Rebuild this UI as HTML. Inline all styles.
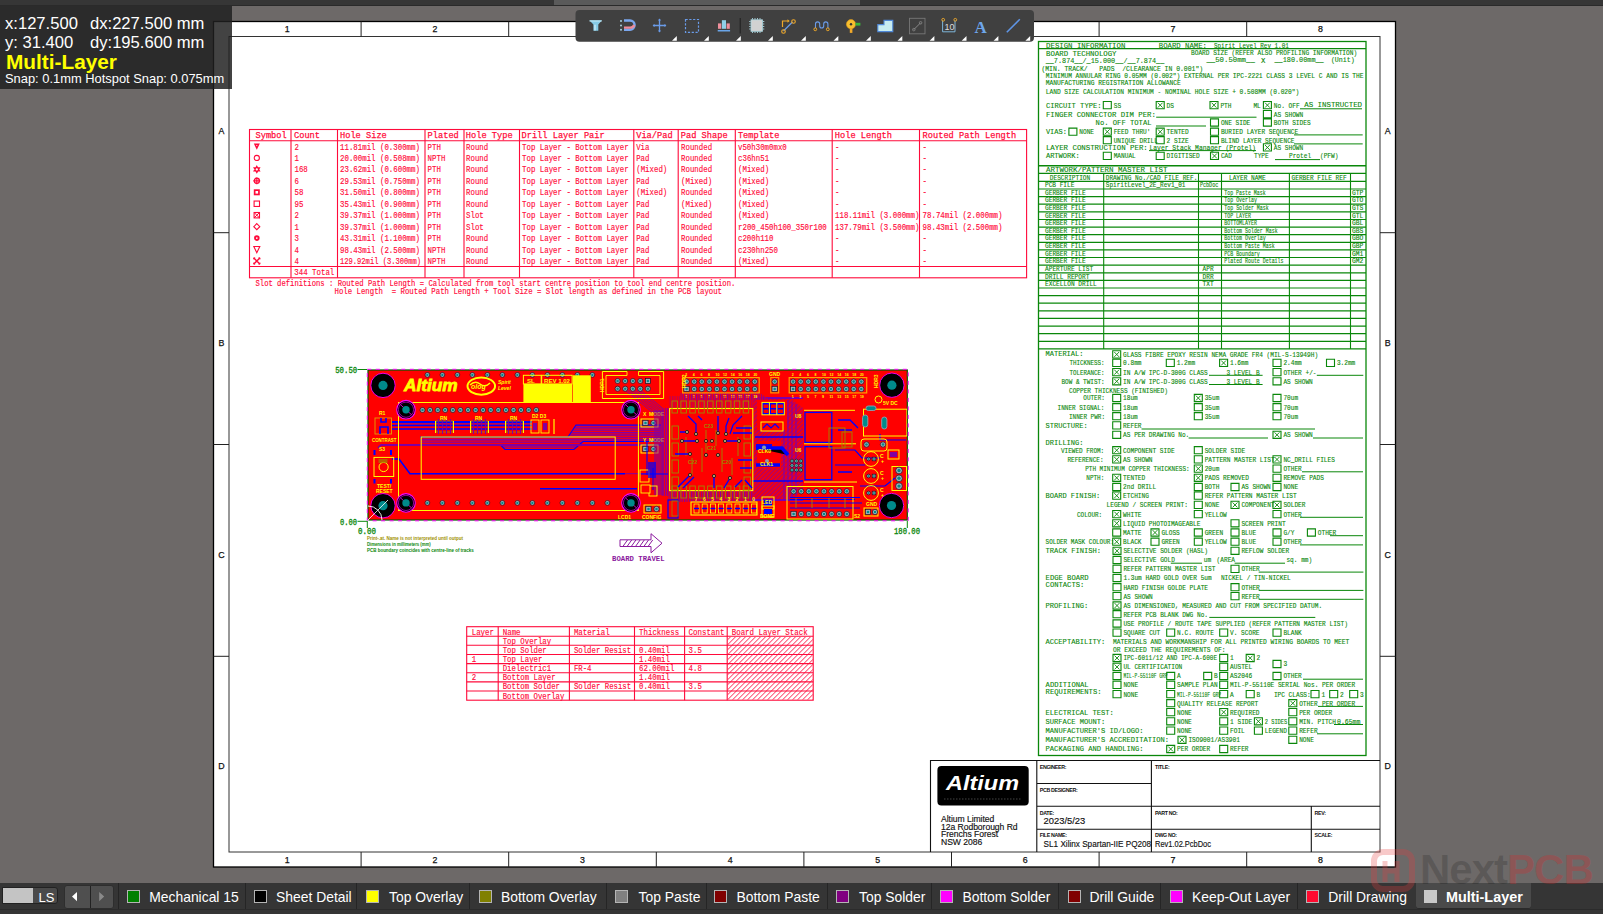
<!DOCTYPE html><html><head><meta charset="utf-8"><style>
*{margin:0;padding:0;box-sizing:border-box}
html,body{width:1603px;height:914px;overflow:hidden;background:#6d6968;font-family:"Liberation Sans",sans-serif}
#topbar{position:absolute;left:0;top:0;width:1603px;height:6px;background:#363636;border-bottom:1px solid #2a2a2a}
#thumb{position:absolute;left:554px;top:0;width:306px;height:5px;background:#5a5a5a}
svg{position:absolute;left:0;top:0}
.rh{font:9.5px "Liberation Mono",monospace;fill:#ff0a3a;stroke:#ff0a3a;stroke-width:0.25}
.rb{font:8.5px "Liberation Mono",monospace;fill:#ff0a3a;stroke:#ff0a3a;stroke-width:0.15}
.rs{font:8.2px "Liberation Mono",monospace;fill:#ff0a3a;stroke:#ff0a3a;stroke-width:0.15}
.rl{font:8.2px "Liberation Mono",monospace;fill:#ff0a3a;stroke:#ff0a3a;stroke-width:0.15}
.gt{font:8px "Liberation Mono",monospace;fill:#0a870a;stroke:#0a870a;stroke-width:0.12}
.go{font:6.9px "Liberation Mono",monospace;fill:#0a870a;stroke:#0a870a;stroke-width:0.12}
.tb1{font:8.6px "Liberation Sans",sans-serif;fill:#111;stroke:#111;stroke-width:0.15;letter-spacing:-0.05px}
.tbl{font:bold 5.3px "Liberation Sans",sans-serif;fill:#111;letter-spacing:-0.35px}
.tb2{font:8.8px "Liberation Sans",sans-serif;fill:#111;stroke:#111;stroke-width:0.15}
.py{font:bold 5px "Liberation Sans",sans-serif;fill:#ffff00}
.pys{font:bold 3.5px "Liberation Sans",sans-serif;fill:#ffff00}
.pyo{font:bold 5px "Liberation Sans",sans-serif;fill:#9a8a00}
.dim{font:8.2px "Liberation Mono",monospace;fill:#0a870a;stroke:#0a870a;stroke-width:0.3}
.tiny{font:bold 4.5px "Liberation Sans",sans-serif;fill:#0a870a}
.bt2{font:bold 7px "Liberation Mono",monospace;fill:#8b1a9e}
.zl{font:8.8px "Liberation Sans",sans-serif;fill:#111;stroke:#111;stroke-width:0.25;text-anchor:middle}
#hud{position:absolute;left:0;top:6px;width:232px;height:83px;background:rgba(31,31,31,0.84);color:#fff}
.ht{position:absolute;font:16.6px "Liberation Sans",sans-serif;color:#fff;white-space:nowrap;line-height:20px}
.hm{position:absolute;font:bold 20.8px "Liberation Sans",sans-serif;color:#ffff00;white-space:nowrap;line-height:22px}
.hs{position:absolute;font:12.9px "Liberation Sans",sans-serif;color:#fff;white-space:nowrap;line-height:16px}
.bt{position:absolute;font:13.9px "Liberation Sans",sans-serif;color:#fff;white-space:nowrap;line-height:17px}
text{white-space:pre}
#bottom{position:absolute;left:0;top:883px;width:1603px;height:31px;background:#353535}
</style></head><body>
<div id="topbar"><div id="thumb"></div></div>
<svg width="1603" height="914" viewBox="0 0 1603 914"><rect x="213.5" y="21.5" width="1182" height="845.5" fill="#fff" stroke="#000" stroke-width="1.3"/>
<rect x="229" y="36.5" width="1151" height="815.5" fill="none" stroke="#333" stroke-width="1"/>
<line x1="361.1" y1="21.5" x2="361.1" y2="36.5" stroke="#222" stroke-width="1"/>
<line x1="361.1" y1="852" x2="361.1" y2="867" stroke="#222" stroke-width="1"/>
<line x1="508.7" y1="21.5" x2="508.7" y2="36.5" stroke="#222" stroke-width="1"/>
<line x1="508.7" y1="852" x2="508.7" y2="867" stroke="#222" stroke-width="1"/>
<line x1="656.3" y1="21.5" x2="656.3" y2="36.5" stroke="#222" stroke-width="1"/>
<line x1="656.3" y1="852" x2="656.3" y2="867" stroke="#222" stroke-width="1"/>
<line x1="803.9" y1="21.5" x2="803.9" y2="36.5" stroke="#222" stroke-width="1"/>
<line x1="803.9" y1="852" x2="803.9" y2="867" stroke="#222" stroke-width="1"/>
<line x1="951.5" y1="21.5" x2="951.5" y2="36.5" stroke="#222" stroke-width="1"/>
<line x1="951.5" y1="852" x2="951.5" y2="867" stroke="#222" stroke-width="1"/>
<line x1="1099.1" y1="21.5" x2="1099.1" y2="36.5" stroke="#222" stroke-width="1"/>
<line x1="1099.1" y1="852" x2="1099.1" y2="867" stroke="#222" stroke-width="1"/>
<line x1="1246.7" y1="21.5" x2="1246.7" y2="36.5" stroke="#222" stroke-width="1"/>
<line x1="1246.7" y1="852" x2="1246.7" y2="867" stroke="#222" stroke-width="1"/>
<line x1="213.5" y1="232.7" x2="229" y2="232.7" stroke="#222" stroke-width="1"/>
<line x1="1380" y1="232.7" x2="1395.5" y2="232.7" stroke="#222" stroke-width="1"/>
<line x1="213.5" y1="444.5" x2="229" y2="444.5" stroke="#222" stroke-width="1"/>
<line x1="1380" y1="444.5" x2="1395.5" y2="444.5" stroke="#222" stroke-width="1"/>
<line x1="213.5" y1="656.3" x2="229" y2="656.3" stroke="#222" stroke-width="1"/>
<line x1="1380" y1="656.3" x2="1395.5" y2="656.3" stroke="#222" stroke-width="1"/>
<text x="287.3" y="32.3" class="zl">1</text>
<text x="287.3" y="862.7" class="zl">1</text>
<text x="434.9" y="32.3" class="zl">2</text>
<text x="434.9" y="862.7" class="zl">2</text>
<text x="582.5" y="32.3" class="zl">3</text>
<text x="582.5" y="862.7" class="zl">3</text>
<text x="730.1" y="32.3" class="zl">4</text>
<text x="730.1" y="862.7" class="zl">4</text>
<text x="877.7" y="32.3" class="zl">5</text>
<text x="877.7" y="862.7" class="zl">5</text>
<text x="1025.3" y="32.3" class="zl">6</text>
<text x="1025.3" y="862.7" class="zl">6</text>
<text x="1172.9" y="32.3" class="zl">7</text>
<text x="1172.9" y="862.7" class="zl">7</text>
<text x="1320.5" y="32.3" class="zl">8</text>
<text x="1320.5" y="862.7" class="zl">8</text>
<text x="221.4" y="134.0" class="zl">A</text>
<text x="1387.7" y="134.0" class="zl">A</text>
<text x="221.4" y="345.8" class="zl">B</text>
<text x="1387.7" y="345.8" class="zl">B</text>
<text x="221.4" y="557.6" class="zl">C</text>
<text x="1387.7" y="557.6" class="zl">C</text>
<text x="221.4" y="769.4" class="zl">D</text>
<text x="1387.7" y="769.4" class="zl">D</text>
<g stroke="#ff0a3a" stroke-width="1.1" fill="none">
<rect x="249.5" y="129.5" width="777.1" height="148.3"/>
<line x1="291" y1="129.5" x2="291" y2="277.8"/>
<line x1="337.5" y1="129.5" x2="337.5" y2="277.8"/>
<line x1="425" y1="129.5" x2="425" y2="277.8"/>
<line x1="464" y1="129.5" x2="464" y2="277.8"/>
<line x1="519.5" y1="129.5" x2="519.5" y2="277.8"/>
<line x1="633.8" y1="129.5" x2="633.8" y2="277.8"/>
<line x1="678.2" y1="129.5" x2="678.2" y2="277.8"/>
<line x1="735.3" y1="129.5" x2="735.3" y2="277.8"/>
<line x1="832.2" y1="129.5" x2="832.2" y2="277.8"/>
<line x1="919.5" y1="129.5" x2="919.5" y2="277.8"/>
<line x1="249.5" y1="140.7" x2="1026.6" y2="140.7"/>
<line x1="249.5" y1="266.5" x2="1026.6" y2="266.5"/>
</g>
<text x="255.5" y="137.8" class="rh" textLength="31.2" lengthAdjust="spacingAndGlyphs">Symbol</text>
<text x="294.0" y="137.8" class="rh" textLength="26.0" lengthAdjust="spacingAndGlyphs">Count</text>
<text x="340.0" y="137.8" class="rh" textLength="46.8" lengthAdjust="spacingAndGlyphs">Hole Size</text>
<text x="427.6" y="137.8" class="rh" textLength="31.2" lengthAdjust="spacingAndGlyphs">Plated</text>
<text x="465.8" y="137.8" class="rh" textLength="46.8" lengthAdjust="spacingAndGlyphs">Hole Type</text>
<text x="521.5" y="137.8" class="rh" textLength="83.2" lengthAdjust="spacingAndGlyphs">Drill Layer Pair</text>
<text x="636.2" y="137.8" class="rh" textLength="36.4" lengthAdjust="spacingAndGlyphs">Via/Pad</text>
<text x="680.8" y="137.8" class="rh" textLength="46.8" lengthAdjust="spacingAndGlyphs">Pad Shape</text>
<text x="737.9" y="137.8" class="rh" textLength="41.6" lengthAdjust="spacingAndGlyphs">Template</text>
<text x="834.8" y="137.8" class="rh" textLength="57.2" lengthAdjust="spacingAndGlyphs">Hole Length</text>
<text x="922.6" y="137.8" class="rh" textLength="93.6" lengthAdjust="spacingAndGlyphs">Routed Path Length</text>
<text x="294.5" y="149.5" class="rb" textLength="4.4" lengthAdjust="spacingAndGlyphs">2</text>
<text x="340.0" y="149.5" class="rb" textLength="79.9" lengthAdjust="spacingAndGlyphs">11.81mil (0.300mm)</text>
<text x="427.6" y="149.5" class="rb" textLength="13.3" lengthAdjust="spacingAndGlyphs">PTH</text>
<text x="466.0" y="149.5" class="rb" textLength="22.2" lengthAdjust="spacingAndGlyphs">Round</text>
<text x="522.0" y="149.5" class="rb" textLength="106.6" lengthAdjust="spacingAndGlyphs">Top Layer - Bottom Layer</text>
<text x="636.2" y="149.5" class="rb" textLength="13.3" lengthAdjust="spacingAndGlyphs">Via</text>
<text x="681.0" y="149.5" class="rb" textLength="31.1" lengthAdjust="spacingAndGlyphs">Rounded</text>
<text x="738.0" y="149.5" class="rb" textLength="48.8" lengthAdjust="spacingAndGlyphs">v50h30m0mx0</text>
<text x="835.0" y="149.5" class="rb" textLength="4.4" lengthAdjust="spacingAndGlyphs">-</text>
<text x="922.6" y="149.5" class="rb" textLength="4.4" lengthAdjust="spacingAndGlyphs">-</text>
<text x="294.5" y="160.9" class="rb" textLength="4.4" lengthAdjust="spacingAndGlyphs">1</text>
<text x="340.0" y="160.9" class="rb" textLength="79.9" lengthAdjust="spacingAndGlyphs">20.00mil (0.508mm)</text>
<text x="427.6" y="160.9" class="rb" textLength="17.8" lengthAdjust="spacingAndGlyphs">NPTH</text>
<text x="466.0" y="160.9" class="rb" textLength="22.2" lengthAdjust="spacingAndGlyphs">Round</text>
<text x="522.0" y="160.9" class="rb" textLength="106.6" lengthAdjust="spacingAndGlyphs">Top Layer - Bottom Layer</text>
<text x="636.2" y="160.9" class="rb" textLength="13.3" lengthAdjust="spacingAndGlyphs">Pad</text>
<text x="681.0" y="160.9" class="rb" textLength="31.1" lengthAdjust="spacingAndGlyphs">Rounded</text>
<text x="738.0" y="160.9" class="rb" textLength="31.1" lengthAdjust="spacingAndGlyphs">c36hn51</text>
<text x="835.0" y="160.9" class="rb" textLength="4.4" lengthAdjust="spacingAndGlyphs">-</text>
<text x="922.6" y="160.9" class="rb" textLength="4.4" lengthAdjust="spacingAndGlyphs">-</text>
<text x="294.5" y="172.4" class="rb" textLength="13.3" lengthAdjust="spacingAndGlyphs">168</text>
<text x="340.0" y="172.4" class="rb" textLength="79.9" lengthAdjust="spacingAndGlyphs">23.62mil (0.600mm)</text>
<text x="427.6" y="172.4" class="rb" textLength="13.3" lengthAdjust="spacingAndGlyphs">PTH</text>
<text x="466.0" y="172.4" class="rb" textLength="22.2" lengthAdjust="spacingAndGlyphs">Round</text>
<text x="522.0" y="172.4" class="rb" textLength="106.6" lengthAdjust="spacingAndGlyphs">Top Layer - Bottom Layer</text>
<text x="636.2" y="172.4" class="rb" textLength="31.1" lengthAdjust="spacingAndGlyphs">(Mixed)</text>
<text x="681.0" y="172.4" class="rb" textLength="31.1" lengthAdjust="spacingAndGlyphs">Rounded</text>
<text x="738.0" y="172.4" class="rb" textLength="31.1" lengthAdjust="spacingAndGlyphs">(Mixed)</text>
<text x="835.0" y="172.4" class="rb" textLength="4.4" lengthAdjust="spacingAndGlyphs">-</text>
<text x="922.6" y="172.4" class="rb" textLength="4.4" lengthAdjust="spacingAndGlyphs">-</text>
<text x="294.5" y="183.8" class="rb" textLength="4.4" lengthAdjust="spacingAndGlyphs">6</text>
<text x="340.0" y="183.8" class="rb" textLength="79.9" lengthAdjust="spacingAndGlyphs">29.53mil (0.750mm)</text>
<text x="427.6" y="183.8" class="rb" textLength="13.3" lengthAdjust="spacingAndGlyphs">PTH</text>
<text x="466.0" y="183.8" class="rb" textLength="22.2" lengthAdjust="spacingAndGlyphs">Round</text>
<text x="522.0" y="183.8" class="rb" textLength="106.6" lengthAdjust="spacingAndGlyphs">Top Layer - Bottom Layer</text>
<text x="636.2" y="183.8" class="rb" textLength="13.3" lengthAdjust="spacingAndGlyphs">Pad</text>
<text x="681.0" y="183.8" class="rb" textLength="31.1" lengthAdjust="spacingAndGlyphs">(Mixed)</text>
<text x="738.0" y="183.8" class="rb" textLength="31.1" lengthAdjust="spacingAndGlyphs">(Mixed)</text>
<text x="835.0" y="183.8" class="rb" textLength="4.4" lengthAdjust="spacingAndGlyphs">-</text>
<text x="922.6" y="183.8" class="rb" textLength="4.4" lengthAdjust="spacingAndGlyphs">-</text>
<text x="294.5" y="195.3" class="rb" textLength="8.9" lengthAdjust="spacingAndGlyphs">58</text>
<text x="340.0" y="195.3" class="rb" textLength="79.9" lengthAdjust="spacingAndGlyphs">31.50mil (0.800mm)</text>
<text x="427.6" y="195.3" class="rb" textLength="13.3" lengthAdjust="spacingAndGlyphs">PTH</text>
<text x="466.0" y="195.3" class="rb" textLength="22.2" lengthAdjust="spacingAndGlyphs">Round</text>
<text x="522.0" y="195.3" class="rb" textLength="106.6" lengthAdjust="spacingAndGlyphs">Top Layer - Bottom Layer</text>
<text x="636.2" y="195.3" class="rb" textLength="31.1" lengthAdjust="spacingAndGlyphs">(Mixed)</text>
<text x="681.0" y="195.3" class="rb" textLength="31.1" lengthAdjust="spacingAndGlyphs">Rounded</text>
<text x="738.0" y="195.3" class="rb" textLength="31.1" lengthAdjust="spacingAndGlyphs">(Mixed)</text>
<text x="835.0" y="195.3" class="rb" textLength="4.4" lengthAdjust="spacingAndGlyphs">-</text>
<text x="922.6" y="195.3" class="rb" textLength="4.4" lengthAdjust="spacingAndGlyphs">-</text>
<text x="294.5" y="206.8" class="rb" textLength="8.9" lengthAdjust="spacingAndGlyphs">95</text>
<text x="340.0" y="206.8" class="rb" textLength="79.9" lengthAdjust="spacingAndGlyphs">35.43mil (0.900mm)</text>
<text x="427.6" y="206.8" class="rb" textLength="13.3" lengthAdjust="spacingAndGlyphs">PTH</text>
<text x="466.0" y="206.8" class="rb" textLength="22.2" lengthAdjust="spacingAndGlyphs">Round</text>
<text x="522.0" y="206.8" class="rb" textLength="106.6" lengthAdjust="spacingAndGlyphs">Top Layer - Bottom Layer</text>
<text x="636.2" y="206.8" class="rb" textLength="13.3" lengthAdjust="spacingAndGlyphs">Pad</text>
<text x="681.0" y="206.8" class="rb" textLength="31.1" lengthAdjust="spacingAndGlyphs">(Mixed)</text>
<text x="738.0" y="206.8" class="rb" textLength="31.1" lengthAdjust="spacingAndGlyphs">(Mixed)</text>
<text x="835.0" y="206.8" class="rb" textLength="4.4" lengthAdjust="spacingAndGlyphs">-</text>
<text x="922.6" y="206.8" class="rb" textLength="4.4" lengthAdjust="spacingAndGlyphs">-</text>
<text x="294.5" y="218.2" class="rb" textLength="4.4" lengthAdjust="spacingAndGlyphs">2</text>
<text x="340.0" y="218.2" class="rb" textLength="79.9" lengthAdjust="spacingAndGlyphs">39.37mil (1.000mm)</text>
<text x="427.6" y="218.2" class="rb" textLength="13.3" lengthAdjust="spacingAndGlyphs">PTH</text>
<text x="466.0" y="218.2" class="rb" textLength="17.8" lengthAdjust="spacingAndGlyphs">Slot</text>
<text x="522.0" y="218.2" class="rb" textLength="106.6" lengthAdjust="spacingAndGlyphs">Top Layer - Bottom Layer</text>
<text x="636.2" y="218.2" class="rb" textLength="13.3" lengthAdjust="spacingAndGlyphs">Pad</text>
<text x="681.0" y="218.2" class="rb" textLength="31.1" lengthAdjust="spacingAndGlyphs">Rounded</text>
<text x="738.0" y="218.2" class="rb" textLength="31.1" lengthAdjust="spacingAndGlyphs">(Mixed)</text>
<text x="835.0" y="218.2" class="rb" textLength="84.4" lengthAdjust="spacingAndGlyphs">118.11mil (3.000mm)</text>
<text x="922.6" y="218.2" class="rb" textLength="79.9" lengthAdjust="spacingAndGlyphs">78.74mil (2.000mm)</text>
<text x="294.5" y="229.6" class="rb" textLength="4.4" lengthAdjust="spacingAndGlyphs">1</text>
<text x="340.0" y="229.6" class="rb" textLength="79.9" lengthAdjust="spacingAndGlyphs">39.37mil (1.000mm)</text>
<text x="427.6" y="229.6" class="rb" textLength="13.3" lengthAdjust="spacingAndGlyphs">PTH</text>
<text x="466.0" y="229.6" class="rb" textLength="17.8" lengthAdjust="spacingAndGlyphs">Slot</text>
<text x="522.0" y="229.6" class="rb" textLength="106.6" lengthAdjust="spacingAndGlyphs">Top Layer - Bottom Layer</text>
<text x="636.2" y="229.6" class="rb" textLength="13.3" lengthAdjust="spacingAndGlyphs">Pad</text>
<text x="681.0" y="229.6" class="rb" textLength="31.1" lengthAdjust="spacingAndGlyphs">Rounded</text>
<text x="738.0" y="229.6" class="rb" textLength="88.8" lengthAdjust="spacingAndGlyphs">r200_450h100_350r100</text>
<text x="835.0" y="229.6" class="rb" textLength="84.4" lengthAdjust="spacingAndGlyphs">137.79mil (3.500mm)</text>
<text x="922.6" y="229.6" class="rb" textLength="79.9" lengthAdjust="spacingAndGlyphs">98.43mil (2.500mm)</text>
<text x="294.5" y="241.1" class="rb" textLength="4.4" lengthAdjust="spacingAndGlyphs">3</text>
<text x="340.0" y="241.1" class="rb" textLength="79.9" lengthAdjust="spacingAndGlyphs">43.31mil (1.100mm)</text>
<text x="427.6" y="241.1" class="rb" textLength="13.3" lengthAdjust="spacingAndGlyphs">PTH</text>
<text x="466.0" y="241.1" class="rb" textLength="22.2" lengthAdjust="spacingAndGlyphs">Round</text>
<text x="522.0" y="241.1" class="rb" textLength="106.6" lengthAdjust="spacingAndGlyphs">Top Layer - Bottom Layer</text>
<text x="636.2" y="241.1" class="rb" textLength="13.3" lengthAdjust="spacingAndGlyphs">Pad</text>
<text x="681.0" y="241.1" class="rb" textLength="31.1" lengthAdjust="spacingAndGlyphs">Rounded</text>
<text x="738.0" y="241.1" class="rb" textLength="35.5" lengthAdjust="spacingAndGlyphs">c200h110</text>
<text x="835.0" y="241.1" class="rb" textLength="4.4" lengthAdjust="spacingAndGlyphs">-</text>
<text x="922.6" y="241.1" class="rb" textLength="4.4" lengthAdjust="spacingAndGlyphs">-</text>
<text x="294.5" y="252.6" class="rb" textLength="4.4" lengthAdjust="spacingAndGlyphs">4</text>
<text x="340.0" y="252.6" class="rb" textLength="79.9" lengthAdjust="spacingAndGlyphs">98.43mil (2.500mm)</text>
<text x="427.6" y="252.6" class="rb" textLength="17.8" lengthAdjust="spacingAndGlyphs">NPTH</text>
<text x="466.0" y="252.6" class="rb" textLength="22.2" lengthAdjust="spacingAndGlyphs">Round</text>
<text x="522.0" y="252.6" class="rb" textLength="106.6" lengthAdjust="spacingAndGlyphs">Top Layer - Bottom Layer</text>
<text x="636.2" y="252.6" class="rb" textLength="13.3" lengthAdjust="spacingAndGlyphs">Pad</text>
<text x="681.0" y="252.6" class="rb" textLength="31.1" lengthAdjust="spacingAndGlyphs">Rounded</text>
<text x="738.0" y="252.6" class="rb" textLength="40.0" lengthAdjust="spacingAndGlyphs">c230hn250</text>
<text x="835.0" y="252.6" class="rb" textLength="4.4" lengthAdjust="spacingAndGlyphs">-</text>
<text x="922.6" y="252.6" class="rb" textLength="4.4" lengthAdjust="spacingAndGlyphs">-</text>
<text x="294.5" y="264.0" class="rb" textLength="4.4" lengthAdjust="spacingAndGlyphs">4</text>
<text x="340.0" y="264.0" class="rb" textLength="81.1" lengthAdjust="spacingAndGlyphs">129.92mil (3.300mm)</text>
<text x="427.6" y="264.0" class="rb" textLength="17.8" lengthAdjust="spacingAndGlyphs">NPTH</text>
<text x="466.0" y="264.0" class="rb" textLength="22.2" lengthAdjust="spacingAndGlyphs">Round</text>
<text x="522.0" y="264.0" class="rb" textLength="106.6" lengthAdjust="spacingAndGlyphs">Top Layer - Bottom Layer</text>
<text x="636.2" y="264.0" class="rb" textLength="13.3" lengthAdjust="spacingAndGlyphs">Pad</text>
<text x="681.0" y="264.0" class="rb" textLength="31.1" lengthAdjust="spacingAndGlyphs">Rounded</text>
<text x="738.0" y="264.0" class="rb" textLength="31.1" lengthAdjust="spacingAndGlyphs">(Mixed)</text>
<text x="835.0" y="264.0" class="rb" textLength="4.4" lengthAdjust="spacingAndGlyphs">-</text>
<text x="922.6" y="264.0" class="rb" textLength="4.4" lengthAdjust="spacingAndGlyphs">-</text>
<text x="294.3" y="275.0" class="rb" textLength="40.0" lengthAdjust="spacingAndGlyphs">344 Total</text>
<path d="M253.8,143.5 L259.8,143.5 L256.8,149.7 Z" fill="#ff0a3a"/><path d="M256.1,144.9 L257.5,144.9 L256.8,146.3 Z" fill="#fff"/>
<circle cx="256.8" cy="157.95" r="2.6" fill="none" stroke="#ff0a3a" stroke-width="1.1"/>
<path d="M256.8,166.20000000000002 L259.6,171.0 L254.0,171.0 Z M256.8,172.6 L259.6,167.8 L254.0,167.8 Z" fill="none" stroke="#ff0a3a" stroke-width="1.1"/>
<circle cx="256.8" cy="180.85" r="2.6" fill="none" stroke="#ff0a3a" stroke-width="1.3"/><path d="M256.8,177.45V184.25M253.4,180.85H260.2" stroke="#ff0a3a" stroke-width="1.1"/>
<rect x="253.8" y="189.3" width="6" height="6" fill="#ff0a3a"/><rect x="255.5" y="191.0" width="2.6" height="2.6" fill="#fff"/>
<rect x="254.10000000000002" y="201.05" width="5.4" height="5.4" fill="none" stroke="#ff0a3a" stroke-width="1.1"/>
<rect x="254.10000000000002" y="212.5" width="5.4" height="5.4" fill="none" stroke="#ff0a3a" stroke-width="1.1"/><path d="M254.10000000000002,212.5L259.5,217.89999999999998M259.5,212.5L254.10000000000002,217.89999999999998" stroke="#ff0a3a" stroke-width="1"/>
<path d="M256.8,223.64999999999998 L259.8,226.64999999999998 L256.8,229.64999999999998 L253.8,226.64999999999998 Z" fill="none" stroke="#ff0a3a" stroke-width="1.1"/>
<circle cx="256.8" cy="238.1" r="2.8" fill="#ff0a3a"/><circle cx="256.8" cy="238.1" r="0.9" fill="#fff"/>
<path d="M253.8,246.55 L259.8,246.55 L256.8,252.75 Z" fill="none" stroke="#ff0a3a" stroke-width="1.1"/>
<path d="M253.8,258.0L259.8,264.0M259.8,258.0L253.8,264.0" stroke="#ff0a3a" stroke-width="1.4" fill="none"/><path d="M253.60000000000002,259.4V257.8H255.20000000000002M260.0,259.4V257.8H258.40000000000003M253.60000000000002,262.6V264.2H255.20000000000002M260.0,262.6V264.2H258.40000000000003" stroke="#ff0a3a" stroke-width="0.8" fill="none"/>
<text x="255.5" y="286.2" class="rs" textLength="479.8" lengthAdjust="spacingAndGlyphs">Slot definitions : Routed Path Length = Calculated from tool start centre position to tool end centre position.</text>
<text x="334.5" y="293.9" class="rs" textLength="387.5" lengthAdjust="spacingAndGlyphs">Hole Length  = Routed Path Length + Tool Size = Slot length as defined in the PCB layout</text>
<g stroke="#ff0a3a" stroke-width="1.1" fill="none">
<rect x="466.7" y="626.7" width="346.5" height="73.5"/>
<line x1="498.2" y1="626.7" x2="498.2" y2="700.2"/>
<line x1="569.4" y1="626.7" x2="569.4" y2="700.2"/>
<line x1="634.5" y1="626.7" x2="634.5" y2="700.2"/>
<line x1="684.6" y1="626.7" x2="684.6" y2="700.2"/>
<line x1="727.2" y1="626.7" x2="727.2" y2="700.2"/>
<line x1="466.7" y1="636.2" x2="813.2" y2="636.2"/>
<line x1="466.7" y1="645.3" x2="813.2" y2="645.3"/>
<line x1="466.7" y1="654.5" x2="813.2" y2="654.5"/>
<line x1="466.7" y1="663.6" x2="813.2" y2="663.6"/>
<line x1="466.7" y1="672.8" x2="813.2" y2="672.8"/>
<line x1="466.7" y1="681.9" x2="813.2" y2="681.9"/>
<line x1="466.7" y1="691.0" x2="813.2" y2="691.0"/>
</g>
<defs><clipPath id="hclip"><rect x="727.7" y="636.7" width="85" height="63"/></clipPath></defs>
<path d="M667.2,700.2 L730.7,636.7 M672.2,700.2 L735.7,636.7 M677.2,700.2 L740.7,636.7 M682.2,700.2 L745.7,636.7 M687.2,700.2 L750.7,636.7 M692.2,700.2 L755.7,636.7 M697.2,700.2 L760.7,636.7 M702.2,700.2 L765.7,636.7 M707.2,700.2 L770.7,636.7 M712.2,700.2 L775.7,636.7 M717.2,700.2 L780.7,636.7 M722.2,700.2 L785.7,636.7 M727.2,700.2 L790.7,636.7 M732.2,700.2 L795.7,636.7 M737.2,700.2 L800.7,636.7 M742.2,700.2 L805.7,636.7 M747.2,700.2 L810.7,636.7 M752.2,700.2 L815.7,636.7 M757.2,700.2 L820.7,636.7 M762.2,700.2 L825.7,636.7 M767.2,700.2 L830.7,636.7 M772.2,700.2 L835.7,636.7 M777.2,700.2 L840.7,636.7 M782.2,700.2 L845.7,636.7 M787.2,700.2 L850.7,636.7 M792.2,700.2 L855.7,636.7 M797.2,700.2 L860.7,636.7 M802.2,700.2 L865.7,636.7 M807.2,700.2 L870.7,636.7 M812.2,700.2 L875.7,636.7 M817.2,700.2 L880.7,636.7 M822.2,700.2 L885.7,636.7 M827.2,700.2 L890.7,636.7 M832.2,700.2 L895.7,636.7 M837.2,700.2 L900.7,636.7 M842.2,700.2 L905.7,636.7 M847.2,700.2 L910.7,636.7 M852.2,700.2 L915.7,636.7 M857.2,700.2 L920.7,636.7 M862.2,700.2 L925.7,636.7 M867.2,700.2 L930.7,636.7 M872.2,700.2 L935.7,636.7 M877.2,700.2 L940.7,636.7 M882.2,700.2 L945.7,636.7 M887.2,700.2 L950.7,636.7 M892.2,700.2 L955.7,636.7 M897.2,700.2 L960.7,636.7 M902.2,700.2 L965.7,636.7 M907.2,700.2 L970.7,636.7 M912.2,700.2 L975.7,636.7 M917.2,700.2 L980.7,636.7 M922.2,700.2 L985.7,636.7" stroke="#ff0a3a" stroke-width="0.9" clip-path="url(#hclip)"/>
<text x="471.7" y="634.5" class="rl" textLength="22.3" lengthAdjust="spacingAndGlyphs">Layer</text>
<text x="502.7" y="634.5" class="rl" textLength="17.9" lengthAdjust="spacingAndGlyphs">Name</text>
<text x="573.9" y="634.5" class="rl" textLength="35.8" lengthAdjust="spacingAndGlyphs">Material</text>
<text x="639.0" y="634.5" class="rl" textLength="40.2" lengthAdjust="spacingAndGlyphs">Thickness</text>
<text x="688.6" y="634.5" class="rl" textLength="35.8" lengthAdjust="spacingAndGlyphs">Constant</text>
<text x="731.7" y="634.5" class="rl" textLength="76.0" lengthAdjust="spacingAndGlyphs">Board Layer Stack</text>
<text x="502.7" y="643.7" class="rl" textLength="48.5" lengthAdjust="spacingAndGlyphs">Top Overlay</text>
<text x="502.7" y="652.8" class="rl" textLength="44.1" lengthAdjust="spacingAndGlyphs">Top Solder</text>
<text x="573.9" y="652.8" class="rl" textLength="57.3" lengthAdjust="spacingAndGlyphs">Solder Resist</text>
<text x="639.0" y="652.8" class="rl" textLength="30.9" lengthAdjust="spacingAndGlyphs">0.40mil</text>
<text x="688.6" y="652.8" class="rl" textLength="13.2" lengthAdjust="spacingAndGlyphs">3.5</text>
<text x="471.7" y="662.0" class="rl" textLength="4.4" lengthAdjust="spacingAndGlyphs">1</text>
<text x="502.7" y="662.0" class="rl" textLength="39.7" lengthAdjust="spacingAndGlyphs">Top Layer</text>
<text x="639.0" y="662.0" class="rl" textLength="30.9" lengthAdjust="spacingAndGlyphs">1.40mil</text>
<text x="502.7" y="671.1" class="rl" textLength="48.5" lengthAdjust="spacingAndGlyphs">Dielectric1</text>
<text x="573.9" y="671.1" class="rl" textLength="17.6" lengthAdjust="spacingAndGlyphs">FR-4</text>
<text x="639.0" y="671.1" class="rl" textLength="35.3" lengthAdjust="spacingAndGlyphs">62.00mil</text>
<text x="688.6" y="671.1" class="rl" textLength="13.2" lengthAdjust="spacingAndGlyphs">4.8</text>
<text x="471.7" y="680.3" class="rl" textLength="4.4" lengthAdjust="spacingAndGlyphs">2</text>
<text x="502.7" y="680.3" class="rl" textLength="52.9" lengthAdjust="spacingAndGlyphs">Bottom Layer</text>
<text x="639.0" y="680.3" class="rl" textLength="30.9" lengthAdjust="spacingAndGlyphs">1.40mil</text>
<text x="502.7" y="689.4" class="rl" textLength="57.3" lengthAdjust="spacingAndGlyphs">Bottom Solder</text>
<text x="573.9" y="689.4" class="rl" textLength="57.3" lengthAdjust="spacingAndGlyphs">Solder Resist</text>
<text x="639.0" y="689.4" class="rl" textLength="30.9" lengthAdjust="spacingAndGlyphs">0.40mil</text>
<text x="688.6" y="689.4" class="rl" textLength="13.2" lengthAdjust="spacingAndGlyphs">3.5</text>
<text x="502.7" y="698.5" class="rl" textLength="61.7" lengthAdjust="spacingAndGlyphs">Bottom Overlay</text>
<g stroke="#111" fill="none" stroke-width="1.1">
<path d="M930.5,852 V760.5 H1380 M1036.8,760.5 V852 M1151.4,760.5 V852 M1311.3,806.3 V852 M1036.8,783.5 H1151.4 M1036.8,806.3 H1380 M1036.8,829.3 H1380"/>
</g>
<rect x="937.4" y="765.9" width="91.3" height="39.5" rx="4" fill="#000"/>
<text x="946" y="790.3" style="font:italic bold 21px 'Liberation Sans',sans-serif;fill:#fff" textLength="73" lengthAdjust="spacingAndGlyphs">Altium</text>
<line x1="944" y1="799" x2="1022" y2="799" stroke="#444" stroke-width="1" stroke-dasharray="1.5,1.5"/>
<text x="941" y="822.3" class="tb1">Altium Limited</text>
<text x="941" y="829.8" class="tb1">12a Rodborough Rd</text>
<text x="941" y="837.4" class="tb1">Frenchs Forest</text>
<text x="941" y="844.9" class="tb1">NSW 2086</text>
<text x="1039.8" y="768.8" class="tbl">ENGINEER:</text>
<text x="1155" y="768.8" class="tbl">TITLE:</text>
<text x="1039.8" y="791.5" class="tbl">PCB DESIGNER:</text>
<text x="1039.8" y="814.6" class="tbl">DATE:</text>
<text x="1155" y="814.6" class="tbl">PART NO:</text>
<text x="1314.6" y="814.6" class="tbl">REV:</text>
<text x="1039.8" y="837.3" class="tbl">FILE NAME:</text>
<text x="1155" y="837.3" class="tbl">DWG NO:</text>
<text x="1314.6" y="837.3" class="tbl">SCALE:</text>
<text x="1043.6" y="824.2" class="tb2" textLength="41.7" lengthAdjust="spacingAndGlyphs">2023/5/23</text>
<text x="1043.6" y="846.9" class="tb2" textLength="107.5" lengthAdjust="spacingAndGlyphs">SL1 Xilinx Spartan-IIE PQ208</text>
<text x="1155" y="846.9" class="tb2" textLength="56" lengthAdjust="spacingAndGlyphs">Rev1.02.PcbDoc</text>
<defs><clipPath id="pcbclip"><rect x="368.5" y="370.5" width="538.5" height="149.5"/></clipPath></defs>
<rect x="368" y="370" width="539.3" height="150" fill="#ff0000" stroke="#005a00" stroke-width="1.2"/>
<rect x="367.3" y="369.3" width="540.9" height="151.5" fill="none" stroke="#ff00ff" stroke-width="1" stroke-dasharray="4,4.5"/>
<g clip-path="url(#pcbclip)">
<defs><pattern id="pstr" width="2.4" height="2.4" patternUnits="userSpaceOnUse"><rect width="2.4" height="2.4" fill="#ff0000"/><rect y="0" width="2.4" height="1.3" fill="#7a00b0"/></pattern><pattern id="pdia" width="3" height="3" patternUnits="userSpaceOnUse" patternTransform="rotate(45)"><rect width="3" height="3" fill="#ff0000"/><rect width="1.5" height="3" fill="#7a00b0"/></pattern><pattern id="pver" width="2.4" height="2.4" patternUnits="userSpaceOnUse"><rect width="2.4" height="2.4" fill="#ff0000"/><rect width="1.2" height="2.4" fill="#7a00b0"/></pattern></defs>
<path d="M420,437 H568 L576,425 H669 V441.5 H583 L574,449.5 H505 L500,444.5 H420 Z" fill="url(#pstr)"/>
<path d="M420,437 H568 L576,425 H669 M420,444.5 H500 L505,449.5 H574 L583,441.5 H669" fill="none" stroke="#0000ff" stroke-width="1.1"/>
<path d="M392.0,422.0 L532.0,422.0" fill="none" stroke="#0000ff" stroke-width="1.8" stroke-opacity="1"/>
<path d="M395.0,424.0 L532.0,424.0" fill="none" stroke="#8000a0" stroke-width="0.9" stroke-opacity="1"/>
<path d="M392.0,425.5 L532.0,425.5" fill="none" stroke="#0000ff" stroke-width="1.3" stroke-opacity="1"/>
<path d="M392.0,429.1 L532.0,429.1" fill="none" stroke="#0000ff" stroke-width="1.5" stroke-opacity="1"/>
<path d="M378.0,448.0 L381.0,445.0 L669.0,445.0" fill="none" stroke="#8000a0" stroke-width="1.8" stroke-opacity="1"/>
<path d="M392.0,459.0 L399.0,459.0 L410.0,473.7 L625.0,473.7" fill="none" stroke="#0000ff" stroke-width="1.6" stroke-opacity="1"/>
<path d="M625.0,473.7 L668.0,473.7" fill="none" stroke="#8000a0" stroke-width="1.0" stroke-opacity="1"/>
<path d="M540.0,488.7 L637.0,488.7" fill="none" stroke="#0000ff" stroke-width="1.4" stroke-opacity="1"/>
<path d="M625.0,390.0 L634.0,397.0 L652.0,412.0 L669.0,412.0" fill="none" stroke="#8000a0" stroke-width="0.9" stroke-opacity="1"/>
<path d="M628.0,390.0 L637.0,397.0 L655.0,412.0 L669.0,413.5" fill="none" stroke="#8000a0" stroke-width="0.9" stroke-opacity="1"/>
<path d="M631.0,390.0 L640.0,397.0 L658.0,412.0 L669.0,415.0" fill="none" stroke="#8000a0" stroke-width="0.9" stroke-opacity="1"/>
<path d="M634.0,390.0 L643.0,397.0 L661.0,412.0 L669.0,416.5" fill="none" stroke="#8000a0" stroke-width="0.9" stroke-opacity="1"/>
<path d="M637.0,390.0 L646.0,397.0 L664.0,412.0 L669.0,418.0" fill="none" stroke="#8000a0" stroke-width="0.9" stroke-opacity="1"/>
<path d="M640.0,390.0 L649.0,397.0 L667.0,412.0 L669.0,419.5" fill="none" stroke="#8000a0" stroke-width="0.9" stroke-opacity="1"/>
<rect x="661" y="408" width="8.3" height="88" fill="url(#pver)"/>
<path d="M753,398 L790,398 L803,408 L803,490 L790,500 L753,500 Z" fill="url(#pdia)" opacity="0.6"/>
<path d="M784,400 V500 M788,400 V500 M792,402 V498 M796,404 V496" stroke="#7a00b0" stroke-width="1.1"/>
<path d="M755,398 H803 M752,500 H803" stroke="#7a00b0" stroke-width="2.2"/>
<rect x="757" y="400" width="30" height="30" fill="#ff0000"/>
<rect x="757" y="441" width="24" height="27" fill="#ff0000"/>
<path d="M756,448 H782 L788,455 M756,465 H780" stroke="#0000ff" stroke-width="3.5"/>
<path d="M755,437 H803 M752,481 H803" stroke="#0000ff" stroke-width="1.4"/>
<path d="M790.0,499.5 L855.0,499.5" fill="none" stroke="#0000ff" stroke-width="1.2" stroke-opacity="1"/>
<path d="M790.0,508.0 L860.0,508.0" fill="none" stroke="#0000ff" stroke-width="1.2" stroke-opacity="1"/>
<path d="M835.0,450.0 L855.0,450.0 L862.0,458.0 L880.0,458.0" fill="none" stroke="#0000ff" stroke-width="1.2" stroke-opacity="1"/>
<path d="M835.0,465.0 L865.0,465.0" fill="none" stroke="#0000ff" stroke-width="1.2" stroke-opacity="1"/>
<path d="M838.0,420.0 L850.0,420.0 L858.0,428.0" fill="none" stroke="#0000ff" stroke-width="1.4" stroke-opacity="1"/>
<path d="M838.0,430.0 L852.0,430.0" fill="none" stroke="#0000ff" stroke-width="1.4" stroke-opacity="1"/>
<path d="M838.0,472.0 L852.0,472.0" fill="none" stroke="#0000ff" stroke-width="1.4" stroke-opacity="1"/>
<path d="M860.0,486.0 L885.0,486.0 L895.0,478.0" fill="none" stroke="#0000ff" stroke-width="1.2" stroke-opacity="1"/>
<path d="M880.0,434.0 L880.0,440.0 L906.0,440.0" fill="none" stroke="#0000ff" stroke-width="1.2" stroke-opacity="1"/>
<path d="M680,393 H760 L770,400 H680 Z" fill="url(#pver)" opacity="0.8"/>
<path d="M668,490.6 H753 V502 H668 Z" fill="url(#pver)" opacity="0.8"/>
<circle cx="383" cy="385.4" r="12.2" fill="#000" stroke="#ff00ff" stroke-width="0.9"/><circle cx="383" cy="385.4" r="4.6" fill="#008b8b"/>
<circle cx="383" cy="505.7" r="12.2" fill="#000" stroke="#ff00ff" stroke-width="0.9"/><circle cx="383" cy="505.7" r="4.6" fill="#008b8b"/>
<circle cx="891.9" cy="385.2" r="12.2" fill="#000" stroke="#ff00ff" stroke-width="0.9"/><circle cx="891.9" cy="385.2" r="4.6" fill="#008b8b"/>
<circle cx="891.5" cy="505.5" r="12.2" fill="#000" stroke="#ff00ff" stroke-width="0.9"/><circle cx="891.5" cy="505.5" r="4.6" fill="#008b8b"/>
<rect x="398.5" y="402.5" width="239.9" height="108" fill="none" stroke="#ffff00" stroke-width="1"/>
<rect x="421.2" y="437" width="194" height="42.3" fill="none" stroke="#ffff00" stroke-width="1"/>
<circle cx="406" cy="409.7" r="9.3" fill="#000" stroke="#ff00ff" stroke-width="1.1"/><circle cx="406" cy="409.7" r="7.6" fill="none" stroke="#ff00ff" stroke-width="0.6"/><path d="M400.5,404.7L411.5,414.7" stroke="#ff00ff" stroke-width="0.8"/><circle cx="406" cy="409.7" r="3.7" fill="#008b8b"/>
<circle cx="631" cy="409.7" r="9.3" fill="#000" stroke="#ff00ff" stroke-width="1.1"/><circle cx="631" cy="409.7" r="7.6" fill="none" stroke="#ff00ff" stroke-width="0.6"/><path d="M625.5,404.7L636.5,414.7" stroke="#ff00ff" stroke-width="0.8"/><circle cx="631" cy="409.7" r="3.7" fill="#008b8b"/>
<circle cx="406" cy="502.9" r="9.3" fill="#000" stroke="#ff00ff" stroke-width="1.1"/><circle cx="406" cy="502.9" r="7.6" fill="none" stroke="#ff00ff" stroke-width="0.6"/><path d="M400.5,497.9L411.5,507.9" stroke="#ff00ff" stroke-width="0.8"/><circle cx="406" cy="502.9" r="3.7" fill="#008b8b"/>
<circle cx="631" cy="502.9" r="9.3" fill="#000" stroke="#ff00ff" stroke-width="1.1"/><circle cx="631" cy="502.9" r="7.6" fill="none" stroke="#ff00ff" stroke-width="0.6"/><path d="M625.5,497.9L636.5,507.9" stroke="#ff00ff" stroke-width="0.8"/><circle cx="631" cy="502.9" r="3.7" fill="#008b8b"/>
<circle cx="427.4" cy="374.9" r="2.38" fill="#a4b0ba" stroke="#1a1020" stroke-width="0.7"/><circle cx="427.4" cy="374.9" r="1.19" fill="#008b8b"/>
<circle cx="442.4" cy="374.9" r="2.38" fill="#a4b0ba" stroke="#1a1020" stroke-width="0.7"/><circle cx="442.4" cy="374.9" r="1.19" fill="#008b8b"/>
<circle cx="457.4" cy="374.9" r="2.38" fill="#a4b0ba" stroke="#1a1020" stroke-width="0.7"/><circle cx="457.4" cy="374.9" r="1.19" fill="#008b8b"/>
<circle cx="472.4" cy="374.9" r="2.38" fill="#a4b0ba" stroke="#1a1020" stroke-width="0.7"/><circle cx="472.4" cy="374.9" r="1.19" fill="#008b8b"/>
<circle cx="487.4" cy="374.9" r="2.38" fill="#a4b0ba" stroke="#1a1020" stroke-width="0.7"/><circle cx="487.4" cy="374.9" r="1.19" fill="#008b8b"/>
<circle cx="502.4" cy="374.9" r="2.38" fill="#a4b0ba" stroke="#1a1020" stroke-width="0.7"/><circle cx="502.4" cy="374.9" r="1.19" fill="#008b8b"/>
<circle cx="517.4" cy="374.9" r="2.38" fill="#a4b0ba" stroke="#1a1020" stroke-width="0.7"/><circle cx="517.4" cy="374.9" r="1.19" fill="#008b8b"/>
<circle cx="532.4" cy="374.9" r="2.38" fill="#a4b0ba" stroke="#1a1020" stroke-width="0.7"/><circle cx="532.4" cy="374.9" r="1.19" fill="#008b8b"/>
<circle cx="547.4" cy="374.9" r="2.38" fill="#a4b0ba" stroke="#1a1020" stroke-width="0.7"/><circle cx="547.4" cy="374.9" r="1.19" fill="#008b8b"/>
<circle cx="562.4" cy="374.9" r="2.38" fill="#a4b0ba" stroke="#1a1020" stroke-width="0.7"/><circle cx="562.4" cy="374.9" r="1.19" fill="#008b8b"/>
<circle cx="577.4" cy="374.9" r="2.38" fill="#a4b0ba" stroke="#1a1020" stroke-width="0.7"/><circle cx="577.4" cy="374.9" r="1.19" fill="#008b8b"/>
<circle cx="592.4" cy="374.9" r="2.38" fill="#a4b0ba" stroke="#1a1020" stroke-width="0.7"/><circle cx="592.4" cy="374.9" r="1.19" fill="#008b8b"/>
<circle cx="422.5" cy="410.0" r="2.52" fill="#a4b0ba" stroke="#1a1020" stroke-width="0.7"/><circle cx="422.5" cy="410.0" r="1.26" fill="#008b8b"/>
<circle cx="430.1" cy="410.0" r="2.52" fill="#a4b0ba" stroke="#1a1020" stroke-width="0.7"/><circle cx="430.1" cy="410.0" r="1.26" fill="#008b8b"/>
<circle cx="437.7" cy="410.0" r="2.52" fill="#a4b0ba" stroke="#1a1020" stroke-width="0.7"/><circle cx="437.7" cy="410.0" r="1.26" fill="#008b8b"/>
<circle cx="445.2" cy="410.0" r="2.52" fill="#a4b0ba" stroke="#1a1020" stroke-width="0.7"/><circle cx="445.2" cy="410.0" r="1.26" fill="#008b8b"/>
<circle cx="452.8" cy="410.0" r="2.52" fill="#a4b0ba" stroke="#1a1020" stroke-width="0.7"/><circle cx="452.8" cy="410.0" r="1.26" fill="#008b8b"/>
<circle cx="460.4" cy="410.0" r="2.52" fill="#a4b0ba" stroke="#1a1020" stroke-width="0.7"/><circle cx="460.4" cy="410.0" r="1.26" fill="#008b8b"/>
<circle cx="468.0" cy="410.0" r="2.52" fill="#a4b0ba" stroke="#1a1020" stroke-width="0.7"/><circle cx="468.0" cy="410.0" r="1.26" fill="#008b8b"/>
<circle cx="475.6" cy="410.0" r="2.52" fill="#a4b0ba" stroke="#1a1020" stroke-width="0.7"/><circle cx="475.6" cy="410.0" r="1.26" fill="#008b8b"/>
<circle cx="483.1" cy="410.0" r="2.52" fill="#a4b0ba" stroke="#1a1020" stroke-width="0.7"/><circle cx="483.1" cy="410.0" r="1.26" fill="#008b8b"/>
<circle cx="490.7" cy="410.0" r="2.52" fill="#a4b0ba" stroke="#1a1020" stroke-width="0.7"/><circle cx="490.7" cy="410.0" r="1.26" fill="#008b8b"/>
<circle cx="498.3" cy="410.0" r="2.52" fill="#a4b0ba" stroke="#1a1020" stroke-width="0.7"/><circle cx="498.3" cy="410.0" r="1.26" fill="#008b8b"/>
<circle cx="505.9" cy="410.0" r="2.52" fill="#a4b0ba" stroke="#1a1020" stroke-width="0.7"/><circle cx="505.9" cy="410.0" r="1.26" fill="#008b8b"/>
<circle cx="513.5" cy="410.0" r="2.52" fill="#a4b0ba" stroke="#1a1020" stroke-width="0.7"/><circle cx="513.5" cy="410.0" r="1.26" fill="#008b8b"/>
<circle cx="521.0" cy="410.0" r="2.52" fill="#a4b0ba" stroke="#1a1020" stroke-width="0.7"/><circle cx="521.0" cy="410.0" r="1.26" fill="#008b8b"/>
<circle cx="528.6" cy="410.0" r="2.52" fill="#a4b0ba" stroke="#1a1020" stroke-width="0.7"/><circle cx="528.6" cy="410.0" r="1.26" fill="#008b8b"/>
<circle cx="536.2" cy="410.0" r="2.52" fill="#a4b0ba" stroke="#1a1020" stroke-width="0.7"/><circle cx="536.2" cy="410.0" r="1.26" fill="#008b8b"/>
<circle cx="427.4" cy="502.9" r="2.38" fill="#a4b0ba" stroke="#1a1020" stroke-width="0.7"/><circle cx="427.4" cy="502.9" r="1.19" fill="#008b8b"/>
<circle cx="442.4" cy="502.9" r="2.38" fill="#a4b0ba" stroke="#1a1020" stroke-width="0.7"/><circle cx="442.4" cy="502.9" r="1.19" fill="#008b8b"/>
<circle cx="457.4" cy="502.9" r="2.38" fill="#a4b0ba" stroke="#1a1020" stroke-width="0.7"/><circle cx="457.4" cy="502.9" r="1.19" fill="#008b8b"/>
<circle cx="472.4" cy="502.9" r="2.38" fill="#a4b0ba" stroke="#1a1020" stroke-width="0.7"/><circle cx="472.4" cy="502.9" r="1.19" fill="#008b8b"/>
<circle cx="487.4" cy="502.9" r="2.38" fill="#a4b0ba" stroke="#1a1020" stroke-width="0.7"/><circle cx="487.4" cy="502.9" r="1.19" fill="#008b8b"/>
<circle cx="502.4" cy="502.9" r="2.38" fill="#a4b0ba" stroke="#1a1020" stroke-width="0.7"/><circle cx="502.4" cy="502.9" r="1.19" fill="#008b8b"/>
<circle cx="517.4" cy="502.9" r="2.38" fill="#a4b0ba" stroke="#1a1020" stroke-width="0.7"/><circle cx="517.4" cy="502.9" r="1.19" fill="#008b8b"/>
<circle cx="532.4" cy="502.9" r="2.38" fill="#a4b0ba" stroke="#1a1020" stroke-width="0.7"/><circle cx="532.4" cy="502.9" r="1.19" fill="#008b8b"/>
<circle cx="547.4" cy="502.9" r="2.38" fill="#a4b0ba" stroke="#1a1020" stroke-width="0.7"/><circle cx="547.4" cy="502.9" r="1.19" fill="#008b8b"/>
<circle cx="562.4" cy="502.9" r="2.38" fill="#a4b0ba" stroke="#1a1020" stroke-width="0.7"/><circle cx="562.4" cy="502.9" r="1.19" fill="#008b8b"/>
<circle cx="577.4" cy="502.9" r="2.38" fill="#a4b0ba" stroke="#1a1020" stroke-width="0.7"/><circle cx="577.4" cy="502.9" r="1.19" fill="#008b8b"/>
<circle cx="592.4" cy="502.9" r="2.38" fill="#a4b0ba" stroke="#1a1020" stroke-width="0.7"/><circle cx="592.4" cy="502.9" r="1.19" fill="#008b8b"/>
<circle cx="607.4" cy="502.9" r="2.38" fill="#a4b0ba" stroke="#1a1020" stroke-width="0.7"/><circle cx="607.4" cy="502.9" r="1.19" fill="#008b8b"/>
<text x="404" y="390.8" style="font:italic bold 17px 'Liberation Sans',sans-serif;fill:#ffff00;stroke:#ffff00;stroke-width:0.8" textLength="53.5" lengthAdjust="spacingAndGlyphs">Altium</text>
<ellipse cx="481.3" cy="386.1" rx="13.8" ry="8.6" fill="none" stroke="#ffff00" stroke-width="2"/><path d="M470,385 q5,-5 10,-1 q5,4 10,-1" fill="none" stroke="#ffff00" stroke-width="1.5"/>
<text x="471" y="389" style="font:italic bold 7px 'Liberation Sans',sans-serif;fill:#ffff00">olog</text>
<text x="498" y="384" style="font:italic bold 5px 'Liberation Sans',sans-serif;fill:#ffff00">Spirit</text><text x="498" y="390" style="font:italic bold 5px 'Liberation Sans',sans-serif;fill:#ffff00">Level</text>
<rect x="523.4" y="384" width="48.7" height="18" fill="#ffff00"/><rect x="572.7" y="375.3" width="18.1" height="26.7" fill="#ffff00"/>
<rect x="523.4" y="375.3" width="17.8" height="8.6" fill="none" stroke="#ffff00" stroke-width="1"/><rect x="541.7" y="375.3" width="30.4" height="8.6" fill="none" stroke="#ffff00" stroke-width="1"/>
<text x="527" y="382.5" style="font:bold 6px 'Liberation Sans',sans-serif;fill:#ffff00">SL</text><text x="544" y="382.5" style="font:bold 6px 'Liberation Sans',sans-serif;fill:#ffff00" textLength="26" lengthAdjust="spacingAndGlyphs">REV 1.02</text>
<rect x="375" y="418" width="16.5" height="16" fill="none" stroke="#e0a000" stroke-width="0.9"/><path d="M381,418 V422 H386 V418 M380,434 V427 H388 V434" stroke="#0000ff" stroke-width="1.6" fill="none"/>
<text x="379" y="415" class="py">R1</text><text x="372" y="441.5" class="py" textLength="24.5" lengthAdjust="spacingAndGlyphs">CONTRAST</text>
<rect x="374" y="457.4" width="19.7" height="19.1" fill="none" stroke="#ffff00" stroke-width="1"/><circle cx="383.6" cy="467" r="4.6" fill="none" stroke="#ffff00" stroke-width="1"/><rect x="378.5" y="459" width="9" height="4" fill="#9a8a00" opacity="0.7"/>
<path d="M374.5,450 V455 M374.5,479 V483.5 M391,450 V455 M391,479 V483.5" stroke="#0000ff" stroke-width="2"/>
<text x="379" y="451" class="py">S3</text><text x="377" y="487.5" class="py">TEST/</text><text x="376" y="493" class="py">RESET</text>
<rect x="436" y="421" width="17" height="11" fill="none" stroke="#9a8a00" stroke-width="0.9"/><path d="M435.5,421 V433 M453.5,421 V433" stroke="#ffff00" stroke-width="1"/>
<path d="M438.5,419 V434" stroke="#8000a0" stroke-width="1.1"/>
<path d="M442.5,419 V434" stroke="#8000a0" stroke-width="1.1"/>
<path d="M446.5,419 V434" stroke="#8000a0" stroke-width="1.1"/>
<path d="M450.5,419 V434" stroke="#8000a0" stroke-width="1.1"/>
<text x="440" y="419.5" class="py">RN</text>
<rect x="471" y="421" width="17" height="11" fill="none" stroke="#9a8a00" stroke-width="0.9"/><path d="M470.5,421 V433 M488.5,421 V433" stroke="#ffff00" stroke-width="1"/>
<path d="M473.5,419 V434" stroke="#8000a0" stroke-width="1.1"/>
<path d="M477.5,419 V434" stroke="#8000a0" stroke-width="1.1"/>
<path d="M481.5,419 V434" stroke="#8000a0" stroke-width="1.1"/>
<path d="M485.5,419 V434" stroke="#8000a0" stroke-width="1.1"/>
<text x="475" y="419.5" class="py">RN</text>
<rect x="506" y="421" width="17" height="11" fill="none" stroke="#9a8a00" stroke-width="0.9"/><path d="M505.5,421 V433 M523.5,421 V433" stroke="#ffff00" stroke-width="1"/>
<path d="M508.5,419 V434" stroke="#8000a0" stroke-width="1.1"/>
<path d="M512.5,419 V434" stroke="#8000a0" stroke-width="1.1"/>
<path d="M516.5,419 V434" stroke="#8000a0" stroke-width="1.1"/>
<path d="M520.5,419 V434" stroke="#8000a0" stroke-width="1.1"/>
<text x="510" y="419.5" class="py">RN</text>
<rect x="531" y="420" width="8" height="13" fill="none" stroke="#ffff00" stroke-width="0.9"/><rect x="533" y="423" width="4" height="7" fill="#8000a0"/>
<rect x="541" y="420" width="8" height="13" fill="none" stroke="#ffff00" stroke-width="0.9"/><rect x="543" y="423" width="4" height="7" fill="#8000a0"/>
<path d="M554,419 V434" stroke="#ffff00" stroke-width="1.2"/><text x="532" y="418" class="py">D2 D3</text>
<path d="M627,371.5 H602.4 V398.5 H663.6 V371.5 H638.5" fill="none" stroke="#ffff00" stroke-width="1"/><path d="M627,371.5 V375.5 H606 V394.5 H660 V375.5 H638.5 V371.5" fill="none" stroke="#ffff00" stroke-width="0.9"/>
<text x="596" y="396" class="py" transform="rotate(-90 598 390)">HDR1</text>
<circle cx="617.6" cy="381.0" r="2.52" fill="#a4b0ba" stroke="#1a1020" stroke-width="0.7"/><circle cx="617.6" cy="381.0" r="1.26" fill="#008b8b"/>
<circle cx="617.6" cy="388.7" r="2.52" fill="#a4b0ba" stroke="#1a1020" stroke-width="0.7"/><circle cx="617.6" cy="388.7" r="1.26" fill="#008b8b"/>
<circle cx="625.2" cy="381.0" r="2.52" fill="#a4b0ba" stroke="#1a1020" stroke-width="0.7"/><circle cx="625.2" cy="381.0" r="1.26" fill="#008b8b"/>
<circle cx="625.2" cy="388.7" r="2.52" fill="#a4b0ba" stroke="#1a1020" stroke-width="0.7"/><circle cx="625.2" cy="388.7" r="1.26" fill="#008b8b"/>
<circle cx="632.8" cy="381.0" r="2.52" fill="#a4b0ba" stroke="#1a1020" stroke-width="0.7"/><circle cx="632.8" cy="381.0" r="1.26" fill="#008b8b"/>
<circle cx="632.8" cy="388.7" r="2.52" fill="#a4b0ba" stroke="#1a1020" stroke-width="0.7"/><circle cx="632.8" cy="388.7" r="1.26" fill="#008b8b"/>
<circle cx="640.3" cy="381.0" r="2.52" fill="#a4b0ba" stroke="#1a1020" stroke-width="0.7"/><circle cx="640.3" cy="381.0" r="1.26" fill="#008b8b"/>
<circle cx="640.3" cy="388.7" r="2.52" fill="#a4b0ba" stroke="#1a1020" stroke-width="0.7"/><circle cx="640.3" cy="388.7" r="1.26" fill="#008b8b"/>
<rect x="645.4" y="378.5" width="5.0" height="5.0" fill="#a4b0ba" stroke="#1a1020" stroke-width="0.7"/><circle cx="647.9" cy="381.0" r="1.26" fill="#008b8b"/>
<circle cx="647.9" cy="388.7" r="2.52" fill="#a4b0ba" stroke="#1a1020" stroke-width="0.7"/><circle cx="647.9" cy="388.7" r="1.26" fill="#008b8b"/>
<rect x="682.7" y="377.6" width="76.5" height="15.3" fill="none" stroke="#ffa000" stroke-width="1.2"/>
<circle cx="686.6" cy="381.6" r="2.66" fill="#a4b0ba" stroke="#1a1020" stroke-width="0.7"/><circle cx="686.6" cy="381.6" r="1.33" fill="#008b8b"/>
<rect x="683.9" y="386.3" width="5.3" height="5.3" fill="#a4b0ba" stroke="#1a1020" stroke-width="0.7"/><circle cx="686.6" cy="389.0" r="1.33" fill="#008b8b"/>
<circle cx="694.2" cy="381.6" r="2.66" fill="#a4b0ba" stroke="#1a1020" stroke-width="0.7"/><circle cx="694.2" cy="381.6" r="1.33" fill="#008b8b"/>
<circle cx="694.2" cy="389.0" r="2.66" fill="#a4b0ba" stroke="#1a1020" stroke-width="0.7"/><circle cx="694.2" cy="389.0" r="1.33" fill="#008b8b"/>
<circle cx="701.8" cy="381.6" r="2.66" fill="#a4b0ba" stroke="#1a1020" stroke-width="0.7"/><circle cx="701.8" cy="381.6" r="1.33" fill="#008b8b"/>
<circle cx="701.8" cy="389.0" r="2.66" fill="#a4b0ba" stroke="#1a1020" stroke-width="0.7"/><circle cx="701.8" cy="389.0" r="1.33" fill="#008b8b"/>
<circle cx="709.3" cy="381.6" r="2.66" fill="#a4b0ba" stroke="#1a1020" stroke-width="0.7"/><circle cx="709.3" cy="381.6" r="1.33" fill="#008b8b"/>
<circle cx="709.3" cy="389.0" r="2.66" fill="#a4b0ba" stroke="#1a1020" stroke-width="0.7"/><circle cx="709.3" cy="389.0" r="1.33" fill="#008b8b"/>
<circle cx="716.9" cy="381.6" r="2.66" fill="#a4b0ba" stroke="#1a1020" stroke-width="0.7"/><circle cx="716.9" cy="381.6" r="1.33" fill="#008b8b"/>
<circle cx="716.9" cy="389.0" r="2.66" fill="#a4b0ba" stroke="#1a1020" stroke-width="0.7"/><circle cx="716.9" cy="389.0" r="1.33" fill="#008b8b"/>
<circle cx="724.5" cy="381.6" r="2.66" fill="#a4b0ba" stroke="#1a1020" stroke-width="0.7"/><circle cx="724.5" cy="381.6" r="1.33" fill="#008b8b"/>
<circle cx="724.5" cy="389.0" r="2.66" fill="#a4b0ba" stroke="#1a1020" stroke-width="0.7"/><circle cx="724.5" cy="389.0" r="1.33" fill="#008b8b"/>
<circle cx="732.1" cy="381.6" r="2.66" fill="#a4b0ba" stroke="#1a1020" stroke-width="0.7"/><circle cx="732.1" cy="381.6" r="1.33" fill="#008b8b"/>
<circle cx="732.1" cy="389.0" r="2.66" fill="#a4b0ba" stroke="#1a1020" stroke-width="0.7"/><circle cx="732.1" cy="389.0" r="1.33" fill="#008b8b"/>
<circle cx="739.7" cy="381.6" r="2.66" fill="#a4b0ba" stroke="#1a1020" stroke-width="0.7"/><circle cx="739.7" cy="381.6" r="1.33" fill="#008b8b"/>
<circle cx="739.7" cy="389.0" r="2.66" fill="#a4b0ba" stroke="#1a1020" stroke-width="0.7"/><circle cx="739.7" cy="389.0" r="1.33" fill="#008b8b"/>
<circle cx="747.2" cy="381.6" r="2.66" fill="#a4b0ba" stroke="#1a1020" stroke-width="0.7"/><circle cx="747.2" cy="381.6" r="1.33" fill="#008b8b"/>
<circle cx="747.2" cy="389.0" r="2.66" fill="#a4b0ba" stroke="#1a1020" stroke-width="0.7"/><circle cx="747.2" cy="389.0" r="1.33" fill="#008b8b"/>
<circle cx="754.8" cy="381.6" r="2.66" fill="#a4b0ba" stroke="#1a1020" stroke-width="0.7"/><circle cx="754.8" cy="381.6" r="1.33" fill="#008b8b"/>
<circle cx="754.8" cy="389.0" r="2.66" fill="#a4b0ba" stroke="#1a1020" stroke-width="0.7"/><circle cx="754.8" cy="389.0" r="1.33" fill="#008b8b"/>
<text x="685.2" y="376" class="pys">2</text><text x="685.2" y="398" class="pys">1</text>
<text x="692.8" y="376" class="pys">4</text><text x="692.8" y="398" class="pys">3</text>
<text x="700.4" y="376" class="pys">6</text><text x="700.4" y="398" class="pys">5</text>
<text x="707.9" y="376" class="pys">8</text><text x="707.9" y="398" class="pys">7</text>
<text x="715.5" y="376" class="pys">10</text><text x="715.5" y="398" class="pys">9</text>
<text x="723.1" y="376" class="pys">12</text><text x="723.1" y="398" class="pys">11</text>
<text x="730.7" y="376" class="pys">14</text><text x="730.7" y="398" class="pys">13</text>
<text x="738.3" y="376" class="pys">16</text><text x="738.3" y="398" class="pys">15</text>
<text x="745.8" y="376" class="pys">18</text><text x="745.8" y="398" class="pys">17</text>
<text x="753.4" y="376" class="pys">20</text><text x="753.4" y="398" class="pys">19</text>
<rect x="789.2" y="377.6" width="77.5" height="15.3" fill="none" stroke="#ffa000" stroke-width="1.2"/>
<circle cx="793.1" cy="381.6" r="2.66" fill="#a4b0ba" stroke="#1a1020" stroke-width="0.7"/><circle cx="793.1" cy="381.6" r="1.33" fill="#008b8b"/>
<rect x="790.4" y="386.3" width="5.3" height="5.3" fill="#a4b0ba" stroke="#1a1020" stroke-width="0.7"/><circle cx="793.1" cy="389.0" r="1.33" fill="#008b8b"/>
<circle cx="800.7" cy="381.6" r="2.66" fill="#a4b0ba" stroke="#1a1020" stroke-width="0.7"/><circle cx="800.7" cy="381.6" r="1.33" fill="#008b8b"/>
<circle cx="800.7" cy="389.0" r="2.66" fill="#a4b0ba" stroke="#1a1020" stroke-width="0.7"/><circle cx="800.7" cy="389.0" r="1.33" fill="#008b8b"/>
<circle cx="808.3" cy="381.6" r="2.66" fill="#a4b0ba" stroke="#1a1020" stroke-width="0.7"/><circle cx="808.3" cy="381.6" r="1.33" fill="#008b8b"/>
<circle cx="808.3" cy="389.0" r="2.66" fill="#a4b0ba" stroke="#1a1020" stroke-width="0.7"/><circle cx="808.3" cy="389.0" r="1.33" fill="#008b8b"/>
<circle cx="815.8" cy="381.6" r="2.66" fill="#a4b0ba" stroke="#1a1020" stroke-width="0.7"/><circle cx="815.8" cy="381.6" r="1.33" fill="#008b8b"/>
<circle cx="815.8" cy="389.0" r="2.66" fill="#a4b0ba" stroke="#1a1020" stroke-width="0.7"/><circle cx="815.8" cy="389.0" r="1.33" fill="#008b8b"/>
<circle cx="823.4" cy="381.6" r="2.66" fill="#a4b0ba" stroke="#1a1020" stroke-width="0.7"/><circle cx="823.4" cy="381.6" r="1.33" fill="#008b8b"/>
<circle cx="823.4" cy="389.0" r="2.66" fill="#a4b0ba" stroke="#1a1020" stroke-width="0.7"/><circle cx="823.4" cy="389.0" r="1.33" fill="#008b8b"/>
<circle cx="831.0" cy="381.6" r="2.66" fill="#a4b0ba" stroke="#1a1020" stroke-width="0.7"/><circle cx="831.0" cy="381.6" r="1.33" fill="#008b8b"/>
<circle cx="831.0" cy="389.0" r="2.66" fill="#a4b0ba" stroke="#1a1020" stroke-width="0.7"/><circle cx="831.0" cy="389.0" r="1.33" fill="#008b8b"/>
<circle cx="838.6" cy="381.6" r="2.66" fill="#a4b0ba" stroke="#1a1020" stroke-width="0.7"/><circle cx="838.6" cy="381.6" r="1.33" fill="#008b8b"/>
<circle cx="838.6" cy="389.0" r="2.66" fill="#a4b0ba" stroke="#1a1020" stroke-width="0.7"/><circle cx="838.6" cy="389.0" r="1.33" fill="#008b8b"/>
<circle cx="846.2" cy="381.6" r="2.66" fill="#a4b0ba" stroke="#1a1020" stroke-width="0.7"/><circle cx="846.2" cy="381.6" r="1.33" fill="#008b8b"/>
<circle cx="846.2" cy="389.0" r="2.66" fill="#a4b0ba" stroke="#1a1020" stroke-width="0.7"/><circle cx="846.2" cy="389.0" r="1.33" fill="#008b8b"/>
<circle cx="853.7" cy="381.6" r="2.66" fill="#a4b0ba" stroke="#1a1020" stroke-width="0.7"/><circle cx="853.7" cy="381.6" r="1.33" fill="#008b8b"/>
<circle cx="853.7" cy="389.0" r="2.66" fill="#a4b0ba" stroke="#1a1020" stroke-width="0.7"/><circle cx="853.7" cy="389.0" r="1.33" fill="#008b8b"/>
<circle cx="861.3" cy="381.6" r="2.66" fill="#a4b0ba" stroke="#1a1020" stroke-width="0.7"/><circle cx="861.3" cy="381.6" r="1.33" fill="#008b8b"/>
<circle cx="861.3" cy="389.0" r="2.66" fill="#a4b0ba" stroke="#1a1020" stroke-width="0.7"/><circle cx="861.3" cy="389.0" r="1.33" fill="#008b8b"/>
<text x="791.7" y="376" class="pys">2</text><text x="791.7" y="398" class="pys">1</text>
<text x="799.3" y="376" class="pys">4</text><text x="799.3" y="398" class="pys">3</text>
<text x="806.9" y="376" class="pys">6</text><text x="806.9" y="398" class="pys">5</text>
<text x="814.4" y="376" class="pys">8</text><text x="814.4" y="398" class="pys">7</text>
<text x="822.0" y="376" class="pys">10</text><text x="822.0" y="398" class="pys">9</text>
<text x="829.6" y="376" class="pys">12</text><text x="829.6" y="398" class="pys">11</text>
<text x="837.2" y="376" class="pys">14</text><text x="837.2" y="398" class="pys">13</text>
<text x="844.8" y="376" class="pys">16</text><text x="844.8" y="398" class="pys">15</text>
<text x="852.3" y="376" class="pys">18</text><text x="852.3" y="398" class="pys">17</text>
<text x="859.9" y="376" class="pys">20</text><text x="859.9" y="398" class="pys">19</text>
<rect x="770.8" y="377.6" width="7.9" height="15.3" fill="none" stroke="#ffa000" stroke-width="1.1"/>
<circle cx="774.7" cy="381.6" r="2.66" fill="#a4b0ba" stroke="#1a1020" stroke-width="0.7"/><circle cx="774.7" cy="381.6" r="1.33" fill="#008b8b"/>
<rect x="772.0" y="386.3" width="5.3" height="5.3" fill="#a4b0ba" stroke="#1a1020" stroke-width="0.7"/><circle cx="774.7" cy="389.0" r="1.33" fill="#008b8b"/>
<text x="769" y="375.5" class="py">GND</text>
<text x="678" y="392" class="py" transform="rotate(-90 680 386)">HDR2</text><text x="870" y="392" class="py" transform="rotate(-90 872 386)">HDR3</text>
<rect x="641" y="419" width="17" height="8" fill="none" stroke="#ffff00" stroke-width="1"/>
<rect x="642.8" y="420.3" width="5.3" height="5.3" fill="#a4b0ba" stroke="#1a1020" stroke-width="0.7"/><circle cx="645.5" cy="423.0" r="1.33" fill="#008b8b"/>
<circle cx="653.5" cy="423.0" r="2.66" fill="#a4b0ba" stroke="#1a1020" stroke-width="0.7"/><circle cx="653.5" cy="423.0" r="1.33" fill="#008b8b"/>
<rect x="641" y="445" width="17" height="8" fill="none" stroke="#ffff00" stroke-width="1"/>
<rect x="642.8" y="446.3" width="5.3" height="5.3" fill="#a4b0ba" stroke="#1a1020" stroke-width="0.7"/><circle cx="645.5" cy="449.0" r="1.33" fill="#008b8b"/>
<circle cx="653.5" cy="449.0" r="2.66" fill="#a4b0ba" stroke="#1a1020" stroke-width="0.7"/><circle cx="653.5" cy="449.0" r="1.33" fill="#008b8b"/>
<text x="643" y="416" class="py">X  MODE</text><text x="643" y="442" class="py">Y  MODE</text>
<rect x="654" y="410" width="10" height="85" fill="#8000a0" opacity="0.55"/>
<rect x="669" y="396" width="84" height="12" fill="url(#pver)" opacity="0.45"/>
<rect x="669" y="491" width="84" height="10" fill="url(#pver)" opacity="0.45"/>
<rect x="669.6" y="408.5" width="83.2" height="82.1" fill="none" stroke="#ffff00" stroke-width="1.1"/>
<rect x="672.0" y="401" width="5.5" height="12" fill="none" stroke="#9a8a00" stroke-width="0.9"/>
<rect x="672.0" y="486" width="5.5" height="12" fill="none" stroke="#9a8a00" stroke-width="0.9"/>
<rect x="680.9" y="401" width="5.5" height="12" fill="none" stroke="#9a8a00" stroke-width="0.9"/>
<rect x="680.9" y="486" width="5.5" height="12" fill="none" stroke="#9a8a00" stroke-width="0.9"/>
<rect x="689.8" y="401" width="5.5" height="12" fill="none" stroke="#9a8a00" stroke-width="0.9"/>
<rect x="689.8" y="486" width="5.5" height="12" fill="none" stroke="#9a8a00" stroke-width="0.9"/>
<rect x="698.7" y="401" width="5.5" height="12" fill="none" stroke="#9a8a00" stroke-width="0.9"/>
<rect x="698.7" y="486" width="5.5" height="12" fill="none" stroke="#9a8a00" stroke-width="0.9"/>
<rect x="707.6" y="401" width="5.5" height="12" fill="none" stroke="#9a8a00" stroke-width="0.9"/>
<rect x="707.6" y="486" width="5.5" height="12" fill="none" stroke="#9a8a00" stroke-width="0.9"/>
<rect x="716.5" y="401" width="5.5" height="12" fill="none" stroke="#9a8a00" stroke-width="0.9"/>
<rect x="716.5" y="486" width="5.5" height="12" fill="none" stroke="#9a8a00" stroke-width="0.9"/>
<rect x="725.4" y="401" width="5.5" height="12" fill="none" stroke="#9a8a00" stroke-width="0.9"/>
<rect x="725.4" y="486" width="5.5" height="12" fill="none" stroke="#9a8a00" stroke-width="0.9"/>
<rect x="734.3" y="401" width="5.5" height="12" fill="none" stroke="#9a8a00" stroke-width="0.9"/>
<rect x="734.3" y="486" width="5.5" height="12" fill="none" stroke="#9a8a00" stroke-width="0.9"/>
<rect x="743.2" y="401" width="5.5" height="12" fill="none" stroke="#9a8a00" stroke-width="0.9"/>
<rect x="743.2" y="486" width="5.5" height="12" fill="none" stroke="#9a8a00" stroke-width="0.9"/>
<rect x="672" y="426" width="6.5" height="13" fill="none" stroke="#9a8a00" stroke-width="0.9"/>
<rect x="744" y="426" width="6.5" height="13" fill="none" stroke="#9a8a00" stroke-width="0.9"/>
<rect x="672" y="443" width="6.5" height="13" fill="none" stroke="#9a8a00" stroke-width="0.9"/>
<rect x="744" y="443" width="6.5" height="13" fill="none" stroke="#9a8a00" stroke-width="0.9"/>
<rect x="672" y="460" width="6.5" height="13" fill="none" stroke="#9a8a00" stroke-width="0.9"/>
<rect x="744" y="460" width="6.5" height="13" fill="none" stroke="#9a8a00" stroke-width="0.9"/>
<rect x="672" y="477" width="6.5" height="13" fill="none" stroke="#9a8a00" stroke-width="0.9"/>
<rect x="744" y="477" width="6.5" height="13" fill="none" stroke="#9a8a00" stroke-width="0.9"/>
<path d="M706,430 V452 M716,430 V446 M692,458 V475 M702,448 V472 M722,448 V472 M732,458 V475 M686,437 V456 M738,437 V456" stroke="#9a8a00" stroke-width="0.9"/>
<path d="M688,416 L696,424 V434 M698,416 L702,420 M718,416 V433 M729,418 L726,426 V434 M742,416 L733,425 L730,434" stroke="#0000ff" stroke-width="1.3" fill="none"/>
<path d="M680,432 H687 M682,441 H697 M725,441 H739 M733,433 H752 M736,428 H752 M675,454 H690 M738,460 H752 M740,468 H752" stroke="#0000ff" stroke-width="1.6"/>
<path d="M678,487 L690,475 M683,488 L694,477 M714,488 V476 M724,488 L730,478 M735,487 L742,480 M745,480 L752,488" stroke="#0000ff" stroke-width="1.4"/>
<circle cx="696" cy="434" r="1.6" fill="#b8a878" stroke="#101010" stroke-width="0.8"/>
<circle cx="718" cy="433" r="1.6" fill="#b8a878" stroke="#101010" stroke-width="0.8"/>
<circle cx="726" cy="434" r="1.6" fill="#b8a878" stroke="#101010" stroke-width="0.8"/>
<circle cx="687" cy="432" r="1.6" fill="#b8a878" stroke="#101010" stroke-width="0.8"/>
<circle cx="697" cy="441" r="1.6" fill="#b8a878" stroke="#101010" stroke-width="0.8"/>
<circle cx="682" cy="441" r="1.6" fill="#b8a878" stroke="#101010" stroke-width="0.8"/>
<circle cx="725" cy="441" r="1.6" fill="#b8a878" stroke="#101010" stroke-width="0.8"/>
<circle cx="739" cy="441" r="1.6" fill="#b8a878" stroke="#101010" stroke-width="0.8"/>
<circle cx="690" cy="454" r="1.6" fill="#b8a878" stroke="#101010" stroke-width="0.8"/>
<circle cx="706" cy="441" r="1.6" fill="#b8a878" stroke="#101010" stroke-width="0.8"/>
<circle cx="712" cy="441" r="1.6" fill="#b8a878" stroke="#101010" stroke-width="0.8"/>
<circle cx="706" cy="455" r="1.6" fill="#b8a878" stroke="#101010" stroke-width="0.8"/>
<circle cx="718" cy="455" r="1.6" fill="#b8a878" stroke="#101010" stroke-width="0.8"/>
<circle cx="690" cy="475" r="1.6" fill="#b8a878" stroke="#101010" stroke-width="0.8"/>
<circle cx="714" cy="476" r="1.6" fill="#b8a878" stroke="#101010" stroke-width="0.8"/>
<circle cx="730" cy="478" r="1.6" fill="#b8a878" stroke="#101010" stroke-width="0.8"/>
<text x="704" y="428" class="pyo">C23</text><text x="688" y="464" class="pyo">C22</text><text x="707" y="450" class="pyo">C21</text><text x="722" y="464" class="pyo">C20</text>
<rect x="762" y="402.4" width="22.3" height="12.4" fill="#0000ff" stroke="#ffff00" stroke-width="1"/><path d="M769.4,402.4V414.8M776.8,402.4V414.8" stroke="#ffff00" stroke-width="1"/><rect x="763.5" y="404.5" width="5" height="3.5" fill="#ff0000"/><rect x="771" y="404.5" width="5" height="3.5" fill="#ff0000"/><rect x="778" y="404.5" width="5" height="3.5" fill="#ff0000"/><rect x="763.5" y="409.5" width="5" height="3.5" fill="#ff0000"/><rect x="771" y="409.5" width="5" height="3.5" fill="#ff0000"/><rect x="778" y="409.5" width="5" height="3.5" fill="#ff0000"/>
<rect x="761" y="422" width="22" height="9" fill="#ff0000" stroke="#ffff00" stroke-width="1"/><path d="M763,428 l4,-4 l4,4 l4,-4 l4,4" stroke="#0000ff" stroke-width="1.1" fill="none"/>
<circle cx="764" cy="447.5" r="2" fill="#8c9aa6" stroke="#ffff00" stroke-width="0.8"/><rect x="756" y="444" width="16" height="6" fill="#0000ff" opacity="0.9"/><circle cx="764" cy="447.5" r="2" fill="#8c9aa6"/><text x="758" y="453" class="py">CLK0</text>
<circle cx="767" cy="461" r="2" fill="#8c9aa6"/><text x="760" y="466" class="py">CLK1</text>
<rect x="805" y="412.4" width="26.8" height="30" fill="#ff0000" stroke="#0000ff" stroke-width="1.3"/><rect x="805" y="446.7" width="26.8" height="33" fill="#ff0000" stroke="#0000ff" stroke-width="1.3"/>
<path d="M804,410.3 H855 M804,443.8 H856 M804,482 H857" stroke="#ffff00" stroke-width="1"/>
<text x="795" y="418" class="py">U8</text><text x="795" y="452" class="py">U6</text>
<circle cx="792.0" cy="461.0" r="1.82" fill="#a4b0ba" stroke="#1a1020" stroke-width="0.7"/><circle cx="792.0" cy="461.0" r="0.91" fill="#008b8b"/>
<circle cx="796.4" cy="461.0" r="1.82" fill="#a4b0ba" stroke="#1a1020" stroke-width="0.7"/><circle cx="796.4" cy="461.0" r="0.91" fill="#008b8b"/>
<circle cx="800.8" cy="461.0" r="1.82" fill="#a4b0ba" stroke="#1a1020" stroke-width="0.7"/><circle cx="800.8" cy="461.0" r="0.91" fill="#008b8b"/>
<circle cx="792.0" cy="465.5" r="1.82" fill="#a4b0ba" stroke="#1a1020" stroke-width="0.7"/><circle cx="792.0" cy="465.5" r="0.91" fill="#008b8b"/>
<circle cx="796.4" cy="465.5" r="1.82" fill="#a4b0ba" stroke="#1a1020" stroke-width="0.7"/><circle cx="796.4" cy="465.5" r="0.91" fill="#008b8b"/>
<circle cx="800.8" cy="465.5" r="1.82" fill="#a4b0ba" stroke="#1a1020" stroke-width="0.7"/><circle cx="800.8" cy="465.5" r="0.91" fill="#008b8b"/>
<circle cx="792.0" cy="470.0" r="1.82" fill="#a4b0ba" stroke="#1a1020" stroke-width="0.7"/><circle cx="792.0" cy="470.0" r="0.91" fill="#008b8b"/>
<circle cx="796.4" cy="470.0" r="1.82" fill="#a4b0ba" stroke="#1a1020" stroke-width="0.7"/><circle cx="796.4" cy="470.0" r="0.91" fill="#008b8b"/>
<circle cx="800.8" cy="470.0" r="1.82" fill="#a4b0ba" stroke="#1a1020" stroke-width="0.7"/><circle cx="800.8" cy="470.0" r="0.91" fill="#008b8b"/>
<rect x="829" y="428" width="16" height="20" fill="none" stroke="#9a8a00" stroke-width="0.9"/><rect x="842" y="432" width="10" height="15" fill="none" stroke="#9a8a00" stroke-width="0.9"/>
<rect x="863.5" y="409.2" width="43.4" height="26.8" fill="none" stroke="#ffff00" stroke-width="1"/>
<rect x="862.6" y="415" width="5.2" height="12" rx="2.6" fill="#008b8b" stroke="#8c9aa6" stroke-width="1"/><rect x="881.7" y="417" width="5.2" height="12" rx="2.6" fill="#008b8b" stroke="#8c9aa6" stroke-width="1"/><rect x="866" y="406" width="10" height="4.5" rx="2.2" fill="#008b8b" stroke="#8c9aa6" stroke-width="1"/>
<circle cx="878.5" cy="399.5" r="3.5" fill="none" stroke="#ffff00" stroke-width="1"/><text x="883" y="404.5" class="py">5V DC</text>
<rect x="861" y="439" width="26" height="12" rx="3" fill="none" stroke="#ffff00" stroke-width="1"/>
<circle cx="866.5" cy="444.5" r="2.66" fill="#a4b0ba" stroke="#1a1020" stroke-width="0.7"/><circle cx="866.5" cy="444.5" r="1.33" fill="#008b8b"/>
<circle cx="883.0" cy="444.5" r="2.66" fill="#a4b0ba" stroke="#1a1020" stroke-width="0.7"/><circle cx="883.0" cy="444.5" r="1.33" fill="#008b8b"/>
<circle cx="871" cy="459" r="7.4" fill="none" stroke="#ffff00" stroke-width="1"/>
<circle cx="868.5" cy="459.0" r="1.82" fill="#a4b0ba" stroke="#1a1020" stroke-width="0.7"/><circle cx="868.5" cy="459.0" r="0.91" fill="#008b8b"/>
<rect x="872.2" y="457.2" width="3.6" height="3.6" fill="#a4b0ba" stroke="#1a1020" stroke-width="0.7"/><circle cx="874.0" cy="459.0" r="0.91" fill="#008b8b"/>
<text x="880" y="458" class="py">C</text><text x="881" y="463" class="py">+</text>
<circle cx="871" cy="476" r="7.4" fill="none" stroke="#ffff00" stroke-width="1"/>
<circle cx="868.5" cy="476.0" r="1.82" fill="#a4b0ba" stroke="#1a1020" stroke-width="0.7"/><circle cx="868.5" cy="476.0" r="0.91" fill="#008b8b"/>
<rect x="872.2" y="474.2" width="3.6" height="3.6" fill="#a4b0ba" stroke="#1a1020" stroke-width="0.7"/><circle cx="874.0" cy="476.0" r="0.91" fill="#008b8b"/>
<text x="880" y="475" class="py">C</text><text x="881" y="480" class="py">+</text>
<circle cx="871" cy="493" r="7.4" fill="none" stroke="#ffff00" stroke-width="1"/>
<circle cx="868.5" cy="493.0" r="1.82" fill="#a4b0ba" stroke="#1a1020" stroke-width="0.7"/><circle cx="868.5" cy="493.0" r="0.91" fill="#008b8b"/>
<rect x="872.2" y="491.2" width="3.6" height="3.6" fill="#a4b0ba" stroke="#1a1020" stroke-width="0.7"/><circle cx="874.0" cy="493.0" r="0.91" fill="#008b8b"/>
<text x="880" y="492" class="py">C</text><text x="881" y="497" class="py">+</text>
<rect x="892" y="466.5" width="14.5" height="24" fill="none" stroke="#ffff00" stroke-width="1"/>
<circle cx="899.0" cy="470.5" r="3.36" fill="#a4b0ba" stroke="#1a1020" stroke-width="0.7"/><circle cx="899.0" cy="470.5" r="1.68" fill="#008b8b"/>
<circle cx="899.0" cy="478.3" r="3.36" fill="#a4b0ba" stroke="#1a1020" stroke-width="0.7"/><circle cx="899.0" cy="478.3" r="1.68" fill="#008b8b"/>
<circle cx="899.0" cy="486.1" r="3.36" fill="#a4b0ba" stroke="#1a1020" stroke-width="0.7"/><circle cx="899.0" cy="486.1" r="1.68" fill="#008b8b"/>
<rect x="888" y="450" width="11" height="9" fill="none" stroke="#ffff00" stroke-width="1"/><rect x="890" y="452" width="7" height="5" fill="#8000a0"/>
<rect x="787" y="486.5" width="66" height="32.5" fill="none" stroke="#ffff00" stroke-width="1"/>
<circle cx="793.6" cy="491.3" r="2.66" fill="#a4b0ba" stroke="#1a1020" stroke-width="0.7"/><circle cx="793.6" cy="491.3" r="1.33" fill="#008b8b"/>
<rect x="790.9" y="511.3" width="5.3" height="5.3" fill="#a4b0ba" stroke="#1a1020" stroke-width="0.7"/><circle cx="793.6" cy="514.0" r="1.33" fill="#008b8b"/>
<circle cx="801.2" cy="491.3" r="2.66" fill="#a4b0ba" stroke="#1a1020" stroke-width="0.7"/><circle cx="801.2" cy="491.3" r="1.33" fill="#008b8b"/>
<circle cx="801.2" cy="514.0" r="2.66" fill="#a4b0ba" stroke="#1a1020" stroke-width="0.7"/><circle cx="801.2" cy="514.0" r="1.33" fill="#008b8b"/>
<circle cx="808.8" cy="491.3" r="2.66" fill="#a4b0ba" stroke="#1a1020" stroke-width="0.7"/><circle cx="808.8" cy="491.3" r="1.33" fill="#008b8b"/>
<circle cx="808.8" cy="514.0" r="2.66" fill="#a4b0ba" stroke="#1a1020" stroke-width="0.7"/><circle cx="808.8" cy="514.0" r="1.33" fill="#008b8b"/>
<circle cx="816.4" cy="491.3" r="2.66" fill="#a4b0ba" stroke="#1a1020" stroke-width="0.7"/><circle cx="816.4" cy="491.3" r="1.33" fill="#008b8b"/>
<circle cx="816.4" cy="514.0" r="2.66" fill="#a4b0ba" stroke="#1a1020" stroke-width="0.7"/><circle cx="816.4" cy="514.0" r="1.33" fill="#008b8b"/>
<circle cx="824.0" cy="491.3" r="2.66" fill="#a4b0ba" stroke="#1a1020" stroke-width="0.7"/><circle cx="824.0" cy="491.3" r="1.33" fill="#008b8b"/>
<circle cx="824.0" cy="514.0" r="2.66" fill="#a4b0ba" stroke="#1a1020" stroke-width="0.7"/><circle cx="824.0" cy="514.0" r="1.33" fill="#008b8b"/>
<circle cx="831.6" cy="491.3" r="2.66" fill="#a4b0ba" stroke="#1a1020" stroke-width="0.7"/><circle cx="831.6" cy="491.3" r="1.33" fill="#008b8b"/>
<circle cx="831.6" cy="514.0" r="2.66" fill="#a4b0ba" stroke="#1a1020" stroke-width="0.7"/><circle cx="831.6" cy="514.0" r="1.33" fill="#008b8b"/>
<circle cx="839.2" cy="491.3" r="2.66" fill="#a4b0ba" stroke="#1a1020" stroke-width="0.7"/><circle cx="839.2" cy="491.3" r="1.33" fill="#008b8b"/>
<circle cx="839.2" cy="514.0" r="2.66" fill="#a4b0ba" stroke="#1a1020" stroke-width="0.7"/><circle cx="839.2" cy="514.0" r="1.33" fill="#008b8b"/>
<circle cx="846.8" cy="491.3" r="2.66" fill="#a4b0ba" stroke="#1a1020" stroke-width="0.7"/><circle cx="846.8" cy="491.3" r="1.33" fill="#008b8b"/>
<circle cx="846.8" cy="514.0" r="2.66" fill="#a4b0ba" stroke="#1a1020" stroke-width="0.7"/><circle cx="846.8" cy="514.0" r="1.33" fill="#008b8b"/>
<path d="M790,497.5 H860 M790,503 H862" stroke="#0000ff" stroke-width="1.2"/><path d="M796,498 V508 M812,498 V508 M829,498 V508 M845,498 V508" stroke="#9a8a00" stroke-width="0.9"/>
<text x="854" y="518" class="py">S2</text>
<rect x="864" y="508" width="14" height="8" fill="none" stroke="#ffff00" stroke-width="1"/>
<rect x="865.3" y="509.3" width="5.3" height="5.3" fill="#a4b0ba" stroke="#1a1020" stroke-width="0.7"/><circle cx="868.0" cy="512.0" r="1.33" fill="#008b8b"/>
<circle cx="875.0" cy="512.0" r="2.66" fill="#a4b0ba" stroke="#1a1020" stroke-width="0.7"/><circle cx="875.0" cy="512.0" r="1.33" fill="#008b8b"/>
<text x="866" y="506" class="py">GND</text>
<rect x="762" y="497" width="12" height="12" fill="none" stroke="#ffff00" stroke-width="1"/><rect x="764" y="500" width="8" height="6" fill="#0000ff"/><rect x="762" y="506" width="12" height="11" fill="none" stroke="#ffff00" stroke-width="1"/><rect x="764" y="509" width="8" height="5" fill="#0000ff"/>
<text x="762" y="504" class="py">LED</text><text x="760" y="517.5" class="py">DONE</text>
<rect x="691" y="502" width="66" height="13" fill="none" stroke="#ffff00" stroke-width="1.1"/>
<rect x="694.0" y="504" width="5" height="9" fill="#ff0000" stroke="#ffff00" stroke-width="0.8"/><path d="M694.0,508.5 h5" stroke="#0000ff" stroke-width="1.4"/>
<text x="694.8" y="501" class="py">7</text>
<rect x="702.2" y="504" width="5" height="9" fill="#ff0000" stroke="#ffff00" stroke-width="0.8"/><path d="M702.2,508.5 h5" stroke="#0000ff" stroke-width="1.4"/>
<text x="703.0" y="501" class="py">6</text>
<rect x="710.4" y="504" width="5" height="9" fill="#ff0000" stroke="#ffff00" stroke-width="0.8"/><path d="M710.4,508.5 h5" stroke="#0000ff" stroke-width="1.4"/>
<text x="711.2" y="501" class="py">5</text>
<rect x="718.6" y="504" width="5" height="9" fill="#ff0000" stroke="#ffff00" stroke-width="0.8"/><path d="M718.6,508.5 h5" stroke="#0000ff" stroke-width="1.4"/>
<text x="719.4" y="501" class="py">4</text>
<rect x="726.8" y="504" width="5" height="9" fill="#ff0000" stroke="#ffff00" stroke-width="0.8"/><path d="M726.8,508.5 h5" stroke="#0000ff" stroke-width="1.4"/>
<text x="727.6" y="501" class="py">3</text>
<rect x="735.0" y="504" width="5" height="9" fill="#ff0000" stroke="#ffff00" stroke-width="0.8"/><path d="M735.0,508.5 h5" stroke="#0000ff" stroke-width="1.4"/>
<text x="735.8" y="501" class="py">2</text>
<rect x="743.2" y="504" width="5" height="9" fill="#ff0000" stroke="#ffff00" stroke-width="0.8"/><path d="M743.2,508.5 h5" stroke="#0000ff" stroke-width="1.4"/>
<text x="744.0" y="501" class="py">1</text>
<rect x="751.4" y="504" width="5" height="9" fill="#ff0000" stroke="#ffff00" stroke-width="0.8"/><path d="M751.4,508.5 h5" stroke="#0000ff" stroke-width="1.4"/>
<text x="752.2" y="501" class="py">0</text>
<rect x="644" y="505" width="17" height="8" fill="none" stroke="#ffff00" stroke-width="1"/>
<rect x="645.8" y="506.3" width="5.3" height="5.3" fill="#a4b0ba" stroke="#1a1020" stroke-width="0.7"/><circle cx="648.5" cy="509.0" r="1.33" fill="#008b8b"/>
<circle cx="656.5" cy="509.0" r="2.66" fill="#a4b0ba" stroke="#1a1020" stroke-width="0.7"/><circle cx="656.5" cy="509.0" r="1.33" fill="#008b8b"/>
<text x="618" y="518.5" class="py">LCD1</text><text x="642" y="518.5" class="py">CONFIG</text>
<rect x="668" y="500" width="10" height="18" fill="#ff0000" stroke="#0000ff" stroke-width="1.2"/><rect x="672" y="501" width="6" height="15" fill="none" stroke="#9a8a00" stroke-width="0.8"/>
<path d="M641,474 H668 M647,441 V475 M653,468 V490" stroke="#0000ff" stroke-width="1.1"/>
<rect x="640" y="470" width="9" height="12" fill="none" stroke="#ffff00" stroke-width="0.9"/><rect x="649" y="486" width="8" height="10" fill="none" stroke="#ffff00" stroke-width="0.9"/><rect x="648" y="462" width="8" height="16" fill="#0000ff" opacity="0.7"/>
<rect x="641" y="485" width="9" height="8" fill="#ff0000" stroke="#ffff00" stroke-width="0.9"/>
</g>
<path d="M368,506 A14,14 0 0 1 382,520" fill="none" stroke="#fff" stroke-width="0.9"/><path d="M368,520 L388,500" stroke="#fff" stroke-width="0.8"/><path d="M368,520 V534" stroke="#fff" stroke-width="0.8"/>
<text x="335.2" y="372.8" class="dim" textLength="22" lengthAdjust="spacingAndGlyphs">50.50</text><path d="M357.5,369.5 H367" stroke="#0a870a" stroke-width="1"/>
<text x="340" y="524.5" class="dim" textLength="17" lengthAdjust="spacingAndGlyphs">0.00</text><path d="M357.5,521.3 H367" stroke="#0a870a" stroke-width="1"/><path d="M367.3,521 V528" stroke="#0a870a" stroke-width="1"/>
<text x="358" y="534" class="dim" textLength="18" lengthAdjust="spacingAndGlyphs">0.00</text>
<text x="894" y="534" class="dim" textLength="26" lengthAdjust="spacingAndGlyphs">180.00</text><path d="M907.3,521 V528" stroke="#0a870a" stroke-width="1"/>
<text x="367" y="540" class="tiny" style="fill:#a09000" textLength="96" lengthAdjust="spacingAndGlyphs">Print-.at. Name is not interpreted until output</text>
<text x="367" y="545.8" class="tiny" textLength="63.6" lengthAdjust="spacingAndGlyphs">Dimensions in millimeters (mm)</text>
<text x="367" y="551.8" class="tiny" textLength="106.8" lengthAdjust="spacingAndGlyphs">PCB boundary coincides with centre-line of tracks</text>
<path d="M620,539.8 H651 V533.7 L662,543.2 L651,552.8 V546.5 H620 Z" fill="none" stroke="#8b1a9e" stroke-width="1"/>
<path d="M623.0,546.3 L627.5,540M627.2,546.3 L631.7,540M631.4,546.3 L635.9,540M635.6,546.3 L640.1,540M639.8,546.3 L644.3,540M644.0,546.3 L648.5,540M648.2,546.3 L652.7,540" stroke="#8b1a9e" stroke-width="1"/>
<text x="612" y="561" class="bt2" textLength="52.6" lengthAdjust="spacingAndGlyphs">BOARD TRAVEL</text>
<g stroke="#0a870a" fill="none">
<rect x="1038.5" y="41.5" width="327.5" height="714" stroke-width="1.3"/>
<line x1="1038.5" y1="48.7" x2="1366" y2="48.7" stroke-width="1.2"/>
<line x1="1038.5" y1="165.7" x2="1366" y2="165.7" stroke-width="1.6"/>
<line x1="1038.5" y1="173.3" x2="1366" y2="173.3" stroke-width="1.2"/>
<line x1="1038.5" y1="181.3" x2="1366" y2="181.3" stroke-width="1.2"/>
<line x1="1038.5" y1="189.0" x2="1366" y2="189.0" stroke-width="1.2"/>
<line x1="1038.5" y1="196.6" x2="1366" y2="196.6" stroke-width="1.2"/>
<line x1="1038.5" y1="204.2" x2="1366" y2="204.2" stroke-width="1.2"/>
<line x1="1038.5" y1="211.8" x2="1366" y2="211.8" stroke-width="1.2"/>
<line x1="1038.5" y1="219.5" x2="1366" y2="219.5" stroke-width="1.2"/>
<line x1="1038.5" y1="227.1" x2="1366" y2="227.1" stroke-width="1.2"/>
<line x1="1038.5" y1="234.7" x2="1366" y2="234.7" stroke-width="1.2"/>
<line x1="1038.5" y1="242.3" x2="1366" y2="242.3" stroke-width="1.2"/>
<line x1="1038.5" y1="249.9" x2="1366" y2="249.9" stroke-width="1.2"/>
<line x1="1038.5" y1="257.5" x2="1366" y2="257.5" stroke-width="1.2"/>
<line x1="1038.5" y1="265.1" x2="1366" y2="265.1" stroke-width="1.2"/>
<line x1="1038.5" y1="272.8" x2="1366" y2="272.8" stroke-width="1.2"/>
<line x1="1038.5" y1="280.4" x2="1366" y2="280.4" stroke-width="1.2"/>
<line x1="1038.5" y1="288.0" x2="1366" y2="288.0" stroke-width="1.2"/>
<line x1="1038.5" y1="295.6" x2="1366" y2="295.6" stroke-width="1.2"/>
<line x1="1038.5" y1="303.2" x2="1366" y2="303.2" stroke-width="1.2"/>
<line x1="1038.5" y1="310.8" x2="1366" y2="310.8" stroke-width="1.2"/>
<line x1="1038.5" y1="318.4" x2="1366" y2="318.4" stroke-width="1.2"/>
<line x1="1038.5" y1="326.1" x2="1366" y2="326.1" stroke-width="1.2"/>
<line x1="1038.5" y1="333.7" x2="1366" y2="333.7" stroke-width="1.2"/>
<line x1="1038.5" y1="341.3" x2="1366" y2="341.3" stroke-width="1.2"/>
<line x1="1038.5" y1="348.9" x2="1366" y2="348.9" stroke-width="1.2"/>
<line x1="1103.7" y1="173.3" x2="1103.7" y2="348.9" stroke-width="1.1"/>
<line x1="1198.5" y1="173.3" x2="1198.5" y2="348.9" stroke-width="1.1"/>
<line x1="1221.5" y1="173.3" x2="1221.5" y2="348.9" stroke-width="1.1"/>
<line x1="1289.4" y1="173.3" x2="1289.4" y2="348.9" stroke-width="1.1"/>
<line x1="1350.5" y1="173.3" x2="1350.5" y2="348.9" stroke-width="1.1"/>
</g>
<text x="1046.1" y="47.8" class="gt" textLength="79.2" lengthAdjust="spacingAndGlyphs">DESIGN INFORMATION</text>
<text x="1158.8" y="47.8" class="gt" textLength="48.1" lengthAdjust="spacingAndGlyphs">BOARD NAME:</text>
<text x="1214.0" y="47.8" class="go" textLength="74.8" lengthAdjust="spacingAndGlyphs">Spirit Level Rev 1.01</text>
<text x="1046.1" y="55.5" class="gt" textLength="70.4" lengthAdjust="spacingAndGlyphs">BOARD TECHNOLOGY</text>
<text x="1191.0" y="54.8" class="go" textLength="166.1" lengthAdjust="spacingAndGlyphs">BOARD SIZE (REFER ALSO PROFILING INFORMATION)</text>
<text x="1045.7" y="62.5" class="gt" textLength="118.6" lengthAdjust="spacingAndGlyphs">__7.874__/_15.000__/__7.874__</text>
<text x="1206.4" y="62.2" class="gt" textLength="48.4" lengthAdjust="spacingAndGlyphs">__50.50mm__</text>
<text x="1261.0" y="63.0" class="gt" textLength="4.4" lengthAdjust="spacingAndGlyphs">X</text>
<text x="1274.5" y="62.2" class="gt" textLength="49.2" lengthAdjust="spacingAndGlyphs">__180.00mm__</text>
<text x="1330.9" y="62.2" class="go" textLength="23.8" lengthAdjust="spacingAndGlyphs">(Unit)</text>
<text x="1041.4" y="70.7" class="go" textLength="161.7" lengthAdjust="spacingAndGlyphs">(MIN. TRACK/   PADS  /CLEARANCE IN 0.001")</text>
<text x="1045.7" y="78.3" class="go" textLength="317.9" lengthAdjust="spacingAndGlyphs">MINIMUM ANNULAR RING 0.05MM (0.002") EXTERNAL PER IPC-2221 CLASS 3 LEVEL C AND IS THE</text>
<text x="1045.7" y="85.2" class="go" textLength="135.0" lengthAdjust="spacingAndGlyphs">MANUFACTURING REGISTRATION ALLOWANCE</text>
<text x="1045.7" y="93.9" class="go" textLength="253.6" lengthAdjust="spacingAndGlyphs">LAND SIZE CALCULATION MINIMUM - NOMINAL HOLE SIZE + 0.508MM (0.020")</text>
<text x="1045.9" y="107.5" class="gt" textLength="55.6" lengthAdjust="spacingAndGlyphs">CIRCUIT TYPE:</text>
<text x="1113.7" y="107.5" class="go" textLength="7.4" lengthAdjust="spacingAndGlyphs">SS</text>
<text x="1166.6" y="107.5" class="go" textLength="7.4" lengthAdjust="spacingAndGlyphs">DS</text>
<text x="1220.4" y="107.5" class="go" textLength="11.0" lengthAdjust="spacingAndGlyphs">PTH</text>
<text x="1253.4" y="107.5" class="go" textLength="7.4" lengthAdjust="spacingAndGlyphs">ML</text>
<text x="1273.8" y="107.5" class="go" textLength="25.8" lengthAdjust="spacingAndGlyphs">No. OFF</text>
<text x="1304.2" y="107.0" class="gt" textLength="57.9" lengthAdjust="spacingAndGlyphs">AS INSTRUCTED</text>
<text x="1045.9" y="116.5" class="gt" textLength="110.0" lengthAdjust="spacingAndGlyphs">FINGER CONNECTOR DIM PER:</text>
<text x="1273.8" y="116.5" class="go" textLength="29.4" lengthAdjust="spacingAndGlyphs">AS SHOWN</text>
<text x="1095.6" y="124.9" class="gt" textLength="55.9" lengthAdjust="spacingAndGlyphs">No. OFF TOTAL</text>
<text x="1220.9" y="124.9" class="go" textLength="29.4" lengthAdjust="spacingAndGlyphs">ONE SIDE</text>
<text x="1273.8" y="124.9" class="go" textLength="36.8" lengthAdjust="spacingAndGlyphs">BOTH SIDES</text>
<text x="1045.9" y="134.1" class="gt" textLength="21.0" lengthAdjust="spacingAndGlyphs">VIAS:</text>
<text x="1079.3" y="134.1" class="go" textLength="14.7" lengthAdjust="spacingAndGlyphs">NONE</text>
<text x="1113.7" y="134.1" class="go" textLength="36.8" lengthAdjust="spacingAndGlyphs">FEED THRU'</text>
<text x="1166.6" y="134.1" class="go" textLength="22.1" lengthAdjust="spacingAndGlyphs">TENTED</text>
<text x="1220.9" y="134.1" class="go" textLength="77.3" lengthAdjust="spacingAndGlyphs">BURIED LAYER SEQUENCE</text>
<text x="1113.7" y="142.6" class="go" textLength="44.2" lengthAdjust="spacingAndGlyphs">UNIQUE DRILL</text>
<text x="1166.6" y="142.6" class="go" textLength="22.1" lengthAdjust="spacingAndGlyphs">2 SIZE</text>
<text x="1220.9" y="142.6" class="go" textLength="73.6" lengthAdjust="spacingAndGlyphs">BLIND LAYER SEQUENCE</text>
<text x="1045.9" y="149.8" class="gt" textLength="101.9" lengthAdjust="spacingAndGlyphs">LAYER CONSTRUCTION PER:</text>
<text x="1149.5" y="149.8" class="go" textLength="106.4" lengthAdjust="spacingAndGlyphs">Layer Stack Manager (Protel)</text>
<text x="1273.8" y="149.8" class="go" textLength="29.4" lengthAdjust="spacingAndGlyphs">AS SHOWN</text>
<text x="1045.9" y="158.3" class="gt" textLength="33.9" lengthAdjust="spacingAndGlyphs">ARTWORK:</text>
<text x="1113.7" y="158.3" class="go" textLength="22.1" lengthAdjust="spacingAndGlyphs">MANUAL</text>
<text x="1166.6" y="158.3" class="go" textLength="33.1" lengthAdjust="spacingAndGlyphs">DIGITISED</text>
<text x="1220.9" y="158.3" class="go" textLength="11.0" lengthAdjust="spacingAndGlyphs">CAD</text>
<text x="1254.0" y="158.3" class="go" textLength="14.7" lengthAdjust="spacingAndGlyphs">TYPE</text>
<text x="1289.0" y="157.5" class="go" textLength="22.1" lengthAdjust="spacingAndGlyphs">Protel</text>
<text x="1320.0" y="158.3" class="go" textLength="18.4" lengthAdjust="spacingAndGlyphs">(PFW)</text>
<text x="1046.1" y="172.3" class="gt" textLength="121.5" lengthAdjust="spacingAndGlyphs">ARTWORK/PATTERN MASTER LIST</text>
<text x="1049.8" y="179.7" class="go" textLength="40.4" lengthAdjust="spacingAndGlyphs">DESCRIPTION</text>
<text x="1105.8" y="179.7" class="go" textLength="91.5" lengthAdjust="spacingAndGlyphs">DRAWING No./CAD FILE REF.</text>
<text x="1229.0" y="179.7" class="go" textLength="36.7" lengthAdjust="spacingAndGlyphs">LAYER NAME</text>
<text x="1291.6" y="179.7" class="go" textLength="55.0" lengthAdjust="spacingAndGlyphs">GERBER FILE REF</text>
<text x="1045.0" y="187.1" class="go" textLength="29.4" lengthAdjust="spacingAndGlyphs">PCB FILE</text>
<text x="1105.8" y="187.1" class="go" textLength="79.6" lengthAdjust="spacingAndGlyphs">SpiritLevel_2E_Rev1_01</text>
<text x="1199.9" y="187.1" class="go" textLength="18.4" lengthAdjust="spacingAndGlyphs">PcbDoc</text>
<text x="1045.0" y="194.7" class="go" textLength="40.7" lengthAdjust="spacingAndGlyphs">GERBER FILE</text>
<text x="1224.3" y="194.7" class="go" textLength="41.4" lengthAdjust="spacingAndGlyphs">Top Paste Mask</text>
<text x="1352.0" y="194.7" class="go" textLength="11.4" lengthAdjust="spacingAndGlyphs">GTP</text>
<text x="1045.0" y="202.3" class="go" textLength="40.7" lengthAdjust="spacingAndGlyphs">GERBER FILE</text>
<text x="1224.3" y="202.3" class="go" textLength="32.6" lengthAdjust="spacingAndGlyphs">Top Overlay</text>
<text x="1352.0" y="202.3" class="go" textLength="11.4" lengthAdjust="spacingAndGlyphs">GTO</text>
<text x="1045.0" y="209.9" class="go" textLength="40.7" lengthAdjust="spacingAndGlyphs">GERBER FILE</text>
<text x="1224.3" y="209.9" class="go" textLength="44.4" lengthAdjust="spacingAndGlyphs">Top Solder Mask</text>
<text x="1352.0" y="209.9" class="go" textLength="11.4" lengthAdjust="spacingAndGlyphs">GTS</text>
<text x="1045.0" y="217.5" class="go" textLength="40.7" lengthAdjust="spacingAndGlyphs">GERBER FILE</text>
<text x="1224.3" y="217.5" class="go" textLength="26.6" lengthAdjust="spacingAndGlyphs">TOP LAYER</text>
<text x="1352.0" y="217.5" class="go" textLength="11.4" lengthAdjust="spacingAndGlyphs">GTL</text>
<text x="1045.0" y="225.2" class="go" textLength="40.7" lengthAdjust="spacingAndGlyphs">GERBER FILE</text>
<text x="1224.3" y="225.2" class="go" textLength="32.6" lengthAdjust="spacingAndGlyphs">BOTTOMLAYER</text>
<text x="1352.0" y="225.2" class="go" textLength="11.4" lengthAdjust="spacingAndGlyphs">GBL</text>
<text x="1045.0" y="232.8" class="go" textLength="40.7" lengthAdjust="spacingAndGlyphs">GERBER FILE</text>
<text x="1224.3" y="232.8" class="go" textLength="53.3" lengthAdjust="spacingAndGlyphs">Bottom Solder Mask</text>
<text x="1352.0" y="232.8" class="go" textLength="11.4" lengthAdjust="spacingAndGlyphs">GBS</text>
<text x="1045.0" y="240.4" class="go" textLength="40.7" lengthAdjust="spacingAndGlyphs">GERBER FILE</text>
<text x="1224.3" y="240.4" class="go" textLength="41.4" lengthAdjust="spacingAndGlyphs">Bottom Overlay</text>
<text x="1352.0" y="240.4" class="go" textLength="11.4" lengthAdjust="spacingAndGlyphs">GBO</text>
<text x="1045.0" y="248.0" class="go" textLength="40.7" lengthAdjust="spacingAndGlyphs">GERBER FILE</text>
<text x="1224.3" y="248.0" class="go" textLength="50.3" lengthAdjust="spacingAndGlyphs">Bottom Paste Mask</text>
<text x="1352.0" y="248.0" class="go" textLength="11.4" lengthAdjust="spacingAndGlyphs">GBP</text>
<text x="1045.0" y="255.6" class="go" textLength="40.7" lengthAdjust="spacingAndGlyphs">GERBER FILE</text>
<text x="1224.3" y="255.6" class="go" textLength="35.5" lengthAdjust="spacingAndGlyphs">PCB Boundary</text>
<text x="1352.0" y="255.6" class="go" textLength="11.4" lengthAdjust="spacingAndGlyphs">GM1</text>
<text x="1045.0" y="263.2" class="go" textLength="40.7" lengthAdjust="spacingAndGlyphs">GERBER FILE</text>
<text x="1224.3" y="263.2" class="go" textLength="59.2" lengthAdjust="spacingAndGlyphs">Plated Route Details</text>
<text x="1352.0" y="263.2" class="go" textLength="11.4" lengthAdjust="spacingAndGlyphs">GM2</text>
<text x="1045.0" y="270.8" class="go" textLength="48.1" lengthAdjust="spacingAndGlyphs">APERTURE LIST</text>
<text x="1202.5" y="270.8" class="go" textLength="11.1" lengthAdjust="spacingAndGlyphs">APR</text>
<text x="1045.0" y="278.5" class="go" textLength="44.4" lengthAdjust="spacingAndGlyphs">DRILL REPORT</text>
<text x="1202.5" y="278.5" class="go" textLength="11.1" lengthAdjust="spacingAndGlyphs">DRR</text>
<text x="1045.0" y="286.1" class="go" textLength="51.8" lengthAdjust="spacingAndGlyphs">EXCELLON DRILL</text>
<text x="1202.5" y="286.1" class="go" textLength="11.1" lengthAdjust="spacingAndGlyphs">TXT</text>
<text x="1045.6" y="356.0" class="gt" textLength="37.8" lengthAdjust="spacingAndGlyphs">MATERIAL:</text>
<text x="1123.1" y="356.8" class="go" textLength="195.0" lengthAdjust="spacingAndGlyphs">GLASS FIBRE EPOXY RESIN NEMA GRADE FR4 (MIL-S-13949H)</text>
<text x="1069.5" y="365.3" class="go" textLength="35.0" lengthAdjust="spacingAndGlyphs">THICKNESS:</text>
<text x="1123.1" y="365.3" class="go" textLength="18.4" lengthAdjust="spacingAndGlyphs">0.8mm</text>
<text x="1176.7" y="365.3" class="go" textLength="18.4" lengthAdjust="spacingAndGlyphs">1.2mm</text>
<text x="1230.0" y="365.3" class="go" textLength="18.4" lengthAdjust="spacingAndGlyphs">1.6mm</text>
<text x="1283.4" y="365.3" class="go" textLength="18.4" lengthAdjust="spacingAndGlyphs">2.4mm</text>
<text x="1336.9" y="365.3" class="go" textLength="18.4" lengthAdjust="spacingAndGlyphs">3.2mm</text>
<text x="1069.5" y="374.5" class="go" textLength="35.0" lengthAdjust="spacingAndGlyphs">TOLERANCE:</text>
<text x="1123.1" y="374.5" class="go" textLength="84.6" lengthAdjust="spacingAndGlyphs">IN A/W IPC-D-300G CLASS</text>
<text x="1226.5" y="374.5" class="go" textLength="33.1" lengthAdjust="spacingAndGlyphs">3 LEVEL B</text>
<text x="1283.4" y="374.5" class="go" textLength="33.1" lengthAdjust="spacingAndGlyphs">OTHER +/-</text>
<text x="1061.5" y="383.7" class="go" textLength="43.2" lengthAdjust="spacingAndGlyphs">BOW &amp; TWIST:</text>
<text x="1123.1" y="383.7" class="go" textLength="84.6" lengthAdjust="spacingAndGlyphs">IN A/W IPC-D-300G CLASS</text>
<text x="1226.5" y="383.7" class="go" textLength="33.1" lengthAdjust="spacingAndGlyphs">3 LEVEL B</text>
<text x="1283.4" y="383.7" class="go" textLength="29.4" lengthAdjust="spacingAndGlyphs">AS SHOWN</text>
<text x="1069.0" y="393.3" class="go" textLength="98.8" lengthAdjust="spacingAndGlyphs">COPPER THICKNESS (FINISHED)</text>
<text x="1083.3" y="400.4" class="go" textLength="21.6" lengthAdjust="spacingAndGlyphs">OUTER:</text>
<text x="1123.1" y="400.4" class="go" textLength="14.7" lengthAdjust="spacingAndGlyphs">18um</text>
<text x="1204.7" y="400.4" class="go" textLength="14.7" lengthAdjust="spacingAndGlyphs">35um</text>
<text x="1283.4" y="400.4" class="go" textLength="14.7" lengthAdjust="spacingAndGlyphs">70um</text>
<text x="1057.6" y="409.6" class="go" textLength="46.8" lengthAdjust="spacingAndGlyphs">INNER SIGNAL:</text>
<text x="1123.1" y="409.6" class="go" textLength="14.7" lengthAdjust="spacingAndGlyphs">18um</text>
<text x="1204.7" y="409.6" class="go" textLength="14.7" lengthAdjust="spacingAndGlyphs">35um</text>
<text x="1283.4" y="409.6" class="go" textLength="14.7" lengthAdjust="spacingAndGlyphs">70um</text>
<text x="1069.0" y="418.6" class="go" textLength="36.0" lengthAdjust="spacingAndGlyphs">INNER PWR:</text>
<text x="1123.1" y="418.6" class="go" textLength="14.7" lengthAdjust="spacingAndGlyphs">18um</text>
<text x="1204.7" y="418.6" class="go" textLength="14.7" lengthAdjust="spacingAndGlyphs">35um</text>
<text x="1283.4" y="418.6" class="go" textLength="14.7" lengthAdjust="spacingAndGlyphs">70um</text>
<text x="1045.6" y="427.8" class="gt" textLength="42.0" lengthAdjust="spacingAndGlyphs">STRUCTURE:</text>
<text x="1123.1" y="427.8" class="go" textLength="18.4" lengthAdjust="spacingAndGlyphs">REFER</text>
<text x="1123.1" y="437.2" class="go" textLength="66.2" lengthAdjust="spacingAndGlyphs">AS PER DRAWING No.</text>
<text x="1283.4" y="437.2" class="go" textLength="29.4" lengthAdjust="spacingAndGlyphs">AS SHOWN</text>
<text x="1045.6" y="445.3" class="gt" textLength="37.8" lengthAdjust="spacingAndGlyphs">DRILLING:</text>
<text x="1061.0" y="452.6" class="go" textLength="43.2" lengthAdjust="spacingAndGlyphs">VIEWED FROM:</text>
<text x="1123.1" y="452.6" class="go" textLength="51.5" lengthAdjust="spacingAndGlyphs">COMPONENT SIDE</text>
<text x="1204.7" y="452.6" class="go" textLength="40.5" lengthAdjust="spacingAndGlyphs">SOLDER SIDE</text>
<text x="1067.5" y="461.8" class="go" textLength="36.0" lengthAdjust="spacingAndGlyphs">REFERENCE:</text>
<text x="1123.1" y="461.8" class="go" textLength="29.4" lengthAdjust="spacingAndGlyphs">AS SHOWN</text>
<text x="1204.7" y="461.8" class="go" textLength="69.9" lengthAdjust="spacingAndGlyphs">PATTERN MASTER LIST</text>
<text x="1283.4" y="461.8" class="go" textLength="51.5" lengthAdjust="spacingAndGlyphs">NC_DRILL FILES</text>
<text x="1085.2" y="471.0" class="go" textLength="104.4" lengthAdjust="spacingAndGlyphs">PTH MINIMUM COPPER THICKNESS:</text>
<text x="1204.7" y="471.0" class="go" textLength="14.7" lengthAdjust="spacingAndGlyphs">20um</text>
<text x="1283.4" y="471.0" class="go" textLength="18.4" lengthAdjust="spacingAndGlyphs">OTHER</text>
<text x="1086.3" y="480.2" class="go" textLength="18.0" lengthAdjust="spacingAndGlyphs">NPTH:</text>
<text x="1123.1" y="480.2" class="go" textLength="22.1" lengthAdjust="spacingAndGlyphs">TENTED</text>
<text x="1204.7" y="480.2" class="go" textLength="44.2" lengthAdjust="spacingAndGlyphs">PADS REMOVED</text>
<text x="1283.4" y="480.2" class="go" textLength="40.5" lengthAdjust="spacingAndGlyphs">REMOVE PADS</text>
<text x="1123.1" y="489.4" class="go" textLength="33.1" lengthAdjust="spacingAndGlyphs">2nd DRILL</text>
<text x="1204.7" y="489.4" class="go" textLength="14.7" lengthAdjust="spacingAndGlyphs">BOTH</text>
<text x="1241.4" y="489.4" class="go" textLength="29.4" lengthAdjust="spacingAndGlyphs">AS SHOWN</text>
<text x="1283.4" y="489.4" class="go" textLength="14.7" lengthAdjust="spacingAndGlyphs">NONE</text>
<text x="1045.6" y="498.0" class="gt" textLength="54.6" lengthAdjust="spacingAndGlyphs">BOARD FINISH:</text>
<text x="1123.1" y="498.0" class="go" textLength="25.8" lengthAdjust="spacingAndGlyphs">ETCHING</text>
<text x="1204.7" y="498.0" class="go" textLength="92.0" lengthAdjust="spacingAndGlyphs">REFER PATTERN MASTER LIST</text>
<text x="1106.5" y="507.3" class="go" textLength="81.4" lengthAdjust="spacingAndGlyphs">LEGEND / SCREEN PRINT:</text>
<text x="1204.7" y="507.3" class="go" textLength="14.7" lengthAdjust="spacingAndGlyphs">NONE</text>
<text x="1241.4" y="507.3" class="go" textLength="33.1" lengthAdjust="spacingAndGlyphs">COMPONENT</text>
<text x="1283.4" y="507.3" class="go" textLength="22.1" lengthAdjust="spacingAndGlyphs">SOLDER</text>
<text x="1077.0" y="516.5" class="go" textLength="25.2" lengthAdjust="spacingAndGlyphs">COLOUR:</text>
<text x="1123.1" y="516.5" class="go" textLength="18.4" lengthAdjust="spacingAndGlyphs">WHITE</text>
<text x="1204.7" y="516.5" class="go" textLength="22.1" lengthAdjust="spacingAndGlyphs">YELLOW</text>
<text x="1283.4" y="516.5" class="go" textLength="18.4" lengthAdjust="spacingAndGlyphs">OTHER</text>
<text x="1123.1" y="525.7" class="go" textLength="77.3" lengthAdjust="spacingAndGlyphs">LIQUID PHOTOIMAGEABLE</text>
<text x="1241.4" y="525.7" class="go" textLength="44.2" lengthAdjust="spacingAndGlyphs">SCREEN PRINT</text>
<text x="1123.1" y="534.9" class="go" textLength="18.4" lengthAdjust="spacingAndGlyphs">MATTE</text>
<text x="1161.4" y="534.9" class="go" textLength="18.4" lengthAdjust="spacingAndGlyphs">GLOSS</text>
<text x="1204.7" y="534.9" class="go" textLength="18.4" lengthAdjust="spacingAndGlyphs">GREEN</text>
<text x="1241.4" y="534.9" class="go" textLength="14.7" lengthAdjust="spacingAndGlyphs">BLUE</text>
<text x="1283.4" y="534.9" class="go" textLength="11.0" lengthAdjust="spacingAndGlyphs">G/Y</text>
<text x="1317.8" y="534.9" class="go" textLength="18.4" lengthAdjust="spacingAndGlyphs">OTHER</text>
<text x="1045.6" y="544.1" class="go" textLength="68.4" lengthAdjust="spacingAndGlyphs">SOLDER MASK COLOUR:</text>
<text x="1123.1" y="544.1" class="go" textLength="18.4" lengthAdjust="spacingAndGlyphs">BLACK</text>
<text x="1161.4" y="544.1" class="go" textLength="18.4" lengthAdjust="spacingAndGlyphs">GREEN</text>
<text x="1204.7" y="544.1" class="go" textLength="22.1" lengthAdjust="spacingAndGlyphs">YELLOW</text>
<text x="1241.4" y="544.1" class="go" textLength="14.7" lengthAdjust="spacingAndGlyphs">BLUE</text>
<text x="1283.4" y="544.1" class="go" textLength="18.4" lengthAdjust="spacingAndGlyphs">OTHER</text>
<text x="1045.6" y="553.2" class="gt" textLength="55.4" lengthAdjust="spacingAndGlyphs">TRACK FINISH:</text>
<text x="1123.4" y="553.2" class="go" textLength="84.6" lengthAdjust="spacingAndGlyphs">SELECTIVE SOLDER (HASL)</text>
<text x="1241.4" y="553.2" class="go" textLength="47.8" lengthAdjust="spacingAndGlyphs">REFLOW SOLDER</text>
<text x="1123.4" y="562.4" class="go" textLength="51.5" lengthAdjust="spacingAndGlyphs">SELECTIVE GOLD</text>
<text x="1203.8" y="562.4" class="go" textLength="7.4" lengthAdjust="spacingAndGlyphs">um</text>
<text x="1216.6" y="562.4" class="go" textLength="18.4" lengthAdjust="spacingAndGlyphs">(AREA</text>
<text x="1286.4" y="562.4" class="go" textLength="25.8" lengthAdjust="spacingAndGlyphs">sq. mm)</text>
<text x="1123.4" y="571.3" class="go" textLength="92.0" lengthAdjust="spacingAndGlyphs">REFER PATTERN MASTER LIST</text>
<text x="1241.4" y="571.3" class="go" textLength="18.4" lengthAdjust="spacingAndGlyphs">OTHER</text>
<text x="1045.6" y="580.4" class="gt" textLength="43.0" lengthAdjust="spacingAndGlyphs">EDGE BOARD</text>
<text x="1123.4" y="580.4" class="go" textLength="88.3" lengthAdjust="spacingAndGlyphs">1.3um HARD GOLD OVER 5um</text>
<text x="1220.9" y="580.4" class="go" textLength="69.9" lengthAdjust="spacingAndGlyphs">NICKEL / TIN-NICKEL</text>
<text x="1045.6" y="586.5" class="gt" textLength="38.7" lengthAdjust="spacingAndGlyphs">CONTACTS:</text>
<text x="1123.4" y="589.6" class="go" textLength="84.6" lengthAdjust="spacingAndGlyphs">HARD FINISH GOLDE PLATE</text>
<text x="1241.4" y="589.6" class="go" textLength="18.4" lengthAdjust="spacingAndGlyphs">OTHER</text>
<text x="1123.4" y="598.5" class="go" textLength="29.4" lengthAdjust="spacingAndGlyphs">AS SHOWN</text>
<text x="1241.4" y="598.5" class="go" textLength="18.4" lengthAdjust="spacingAndGlyphs">REFER</text>
<text x="1045.6" y="607.9" class="gt" textLength="42.6" lengthAdjust="spacingAndGlyphs">PROFILING:</text>
<text x="1123.4" y="607.9" class="go" textLength="198.7" lengthAdjust="spacingAndGlyphs">AS DIMENSIONED, MEASURED AND CUT FROM SPECIFIED DATUM.</text>
<text x="1123.4" y="616.6" class="go" textLength="84.6" lengthAdjust="spacingAndGlyphs">REFER PCB BLANK DWG No.</text>
<text x="1123.4" y="625.9" class="go" textLength="224.5" lengthAdjust="spacingAndGlyphs">USE PROFILE / ROUTE TAPE SUPPLIED (REFER PATTERN MASTER LIST)</text>
<text x="1123.4" y="635.0" class="go" textLength="36.8" lengthAdjust="spacingAndGlyphs">SQUARE CUT</text>
<text x="1177.1" y="635.0" class="go" textLength="36.8" lengthAdjust="spacingAndGlyphs">N.C. ROUTE</text>
<text x="1230.1" y="635.0" class="go" textLength="29.4" lengthAdjust="spacingAndGlyphs">V. SCORE</text>
<text x="1283.4" y="635.0" class="go" textLength="18.4" lengthAdjust="spacingAndGlyphs">BLANK</text>
<text x="1045.6" y="643.5" class="gt" textLength="59.6" lengthAdjust="spacingAndGlyphs">ACCEPTABILITY:</text>
<text x="1113.0" y="643.5" class="go" textLength="236.2" lengthAdjust="spacingAndGlyphs">MATERIALS AND WORKMANSHIP FOR ALL PRINTED WIRING BOARDS TO MEET</text>
<text x="1113.0" y="652.0" class="go" textLength="112.5" lengthAdjust="spacingAndGlyphs">OR EXCEED THE REQUIREMENTS OF:</text>
<text x="1123.4" y="660.4" class="go" textLength="93.6" lengthAdjust="spacingAndGlyphs">IPC-6011/12 AND IPC-A-600E</text>
<text x="1230.1" y="660.4" class="go" textLength="3.7" lengthAdjust="spacingAndGlyphs">1</text>
<text x="1256.6" y="660.4" class="go" textLength="3.7" lengthAdjust="spacingAndGlyphs">2</text>
<text x="1123.4" y="669.3" class="go" textLength="58.9" lengthAdjust="spacingAndGlyphs">UL CERTIFICATION</text>
<text x="1230.1" y="669.3" class="go" textLength="22.1" lengthAdjust="spacingAndGlyphs">AUSTEL</text>
<text x="1283.4" y="666.4" class="go" textLength="3.7" lengthAdjust="spacingAndGlyphs">3</text>
<text x="1123.4" y="678.4" class="go" textLength="44.0" lengthAdjust="spacingAndGlyphs">MIL-P-55110F GRP</text>
<text x="1177.1" y="678.4" class="go" textLength="3.7" lengthAdjust="spacingAndGlyphs">A</text>
<text x="1214.1" y="678.4" class="go" textLength="3.7" lengthAdjust="spacingAndGlyphs">B</text>
<text x="1230.1" y="678.4" class="go" textLength="22.1" lengthAdjust="spacingAndGlyphs">AS2046</text>
<text x="1283.4" y="678.4" class="go" textLength="18.4" lengthAdjust="spacingAndGlyphs">OTHER</text>
<text x="1045.6" y="687.3" class="gt" textLength="43.0" lengthAdjust="spacingAndGlyphs">ADDITIONAL</text>
<text x="1123.4" y="687.3" class="go" textLength="14.7" lengthAdjust="spacingAndGlyphs">NONE</text>
<text x="1177.1" y="687.3" class="go" textLength="40.5" lengthAdjust="spacingAndGlyphs">SAMPLE PLAN</text>
<text x="1230.1" y="687.3" class="go" textLength="125.1" lengthAdjust="spacingAndGlyphs">MIL-P-55110E SERIAL Nos. PER ORDER</text>
<text x="1045.6" y="694.0" class="gt" textLength="55.9" lengthAdjust="spacingAndGlyphs">REQUIREMENTS:</text>
<text x="1123.4" y="696.5" class="go" textLength="14.7" lengthAdjust="spacingAndGlyphs">NONE</text>
<text x="1177.1" y="696.5" class="go" textLength="44.0" lengthAdjust="spacingAndGlyphs">MIL-P-55110F GRP</text>
<text x="1230.1" y="696.5" class="go" textLength="3.7" lengthAdjust="spacingAndGlyphs">A</text>
<text x="1256.6" y="696.5" class="go" textLength="3.7" lengthAdjust="spacingAndGlyphs">B</text>
<text x="1273.9" y="696.5" class="go" textLength="36.8" lengthAdjust="spacingAndGlyphs">IPC CLASS:</text>
<text x="1321.4" y="696.5" class="go" textLength="3.7" lengthAdjust="spacingAndGlyphs">1</text>
<text x="1340.1" y="696.5" class="go" textLength="3.7" lengthAdjust="spacingAndGlyphs">2</text>
<text x="1360.1" y="696.5" class="go" textLength="3.7" lengthAdjust="spacingAndGlyphs">3</text>
<text x="1177.1" y="705.6" class="go" textLength="81.0" lengthAdjust="spacingAndGlyphs">QUALITY RELEASE REPORT</text>
<text x="1299.2" y="705.6" class="go" textLength="18.4" lengthAdjust="spacingAndGlyphs">OTHER</text>
<text x="1322.0" y="705.6" class="go" textLength="33.1" lengthAdjust="spacingAndGlyphs">PER ORDER</text>
<text x="1045.6" y="714.5" class="gt" textLength="68.2" lengthAdjust="spacingAndGlyphs">ELECTRICAL TEST:</text>
<text x="1177.1" y="714.5" class="go" textLength="14.7" lengthAdjust="spacingAndGlyphs">NONE</text>
<text x="1230.1" y="714.5" class="go" textLength="29.4" lengthAdjust="spacingAndGlyphs">REQUIRED</text>
<text x="1299.2" y="714.5" class="go" textLength="33.1" lengthAdjust="spacingAndGlyphs">PER ORDER</text>
<text x="1045.6" y="723.7" class="gt" textLength="59.6" lengthAdjust="spacingAndGlyphs">SURFACE MOUNT:</text>
<text x="1177.1" y="723.7" class="go" textLength="14.7" lengthAdjust="spacingAndGlyphs">NONE</text>
<text x="1230.1" y="723.7" class="go" textLength="22.1" lengthAdjust="spacingAndGlyphs">1 SIDE</text>
<text x="1264.8" y="723.7" class="go" textLength="22.4" lengthAdjust="spacingAndGlyphs">2 SIDES</text>
<text x="1299.2" y="723.7" class="go" textLength="36.8" lengthAdjust="spacingAndGlyphs">MIN. PITCH</text>
<text x="1337.0" y="723.7" class="go" textLength="23.4" lengthAdjust="spacingAndGlyphs">0.65mm</text>
<text x="1045.6" y="733.0" class="gt" textLength="98.0" lengthAdjust="spacingAndGlyphs">MANUFACTURER'S ID/LOGO:</text>
<text x="1177.1" y="733.0" class="go" textLength="14.7" lengthAdjust="spacingAndGlyphs">NONE</text>
<text x="1230.1" y="733.0" class="go" textLength="14.7" lengthAdjust="spacingAndGlyphs">FOIL</text>
<text x="1264.8" y="733.0" class="go" textLength="22.1" lengthAdjust="spacingAndGlyphs">LEGEND</text>
<text x="1299.2" y="733.0" class="go" textLength="18.4" lengthAdjust="spacingAndGlyphs">REFER</text>
<text x="1045.6" y="742.2" class="gt" textLength="123.5" lengthAdjust="spacingAndGlyphs">MANUFACTURER'S ACCREDITATION:</text>
<text x="1188.4" y="742.2" class="go" textLength="51.5" lengthAdjust="spacingAndGlyphs">ISO9001/AS3901</text>
<text x="1299.2" y="742.2" class="go" textLength="14.7" lengthAdjust="spacingAndGlyphs">NONE</text>
<text x="1045.6" y="751.4" class="gt" textLength="98.0" lengthAdjust="spacingAndGlyphs">PACKAGING AND HANDLING:</text>
<text x="1177.1" y="751.4" class="go" textLength="33.1" lengthAdjust="spacingAndGlyphs">PER ORDER</text>
<text x="1230.1" y="751.4" class="go" textLength="18.4" lengthAdjust="spacingAndGlyphs">REFER</text>
<path d="M1103.3,101.5h8v7.2h-8zM1156.2,101.5h8v7.2h-8zM1210.0,101.5h8v7.2h-8zM1263.4,101.5h8v7.2h-8zM1263.4,110.5h8v7.2h-8zM1210.5,118.9h8v7.2h-8zM1263.4,118.9h8v7.2h-8zM1068.9,128.1h8v7.2h-8zM1103.3,128.1h8v7.2h-8zM1156.2,128.1h8v7.2h-8zM1210.5,128.1h8v7.2h-8zM1103.3,136.6h8v7.2h-8zM1156.2,136.6h8v7.2h-8zM1210.5,136.6h8v7.2h-8zM1263.4,143.8h8v7.2h-8zM1103.3,152.3h8v7.2h-8zM1156.2,152.3h8v7.2h-8zM1210.5,152.3h8v7.2h-8zM1112.7,350.8h8v7.2h-8zM1112.7,359.3h8v7.2h-8zM1166.3,359.3h8v7.2h-8zM1219.6,359.3h8v7.2h-8zM1273.0,359.3h8v7.2h-8zM1326.5,359.3h8v7.2h-8zM1112.7,368.5h8v7.2h-8zM1273.0,368.5h8v7.2h-8zM1112.7,377.7h8v7.2h-8zM1273.0,377.7h8v7.2h-8zM1112.7,394.4h8v7.2h-8zM1194.3,394.4h8v7.2h-8zM1273.0,394.4h8v7.2h-8zM1112.7,403.6h8v7.2h-8zM1194.3,403.6h8v7.2h-8zM1273.0,403.6h8v7.2h-8zM1112.7,412.6h8v7.2h-8zM1194.3,412.6h8v7.2h-8zM1273.0,412.6h8v7.2h-8zM1112.7,421.8h8v7.2h-8zM1112.7,431.2h8v7.2h-8zM1273.0,431.2h8v7.2h-8zM1112.7,446.6h8v7.2h-8zM1194.3,446.6h8v7.2h-8zM1112.7,455.8h8v7.2h-8zM1194.3,455.8h8v7.2h-8zM1273.0,455.8h8v7.2h-8zM1194.3,465.0h8v7.2h-8zM1273.0,465.0h8v7.2h-8zM1112.7,474.2h8v7.2h-8zM1194.3,474.2h8v7.2h-8zM1273.0,474.2h8v7.2h-8zM1112.7,483.4h8v7.2h-8zM1194.3,483.4h8v7.2h-8zM1231.0,483.4h8v7.2h-8zM1273.0,483.4h8v7.2h-8zM1112.7,492.0h8v7.2h-8zM1194.3,492.0h8v7.2h-8zM1194.3,501.3h8v7.2h-8zM1231.0,501.3h8v7.2h-8zM1273.0,501.3h8v7.2h-8zM1112.7,510.5h8v7.2h-8zM1194.3,510.5h8v7.2h-8zM1273.0,510.5h8v7.2h-8zM1112.7,519.7h8v7.2h-8zM1231.0,519.7h8v7.2h-8zM1112.7,528.9h8v7.2h-8zM1151.0,528.9h8v7.2h-8zM1194.3,528.9h8v7.2h-8zM1231.0,528.9h8v7.2h-8zM1273.0,528.9h8v7.2h-8zM1307.4,528.9h8v7.2h-8zM1112.7,538.1h8v7.2h-8zM1151.0,538.1h8v7.2h-8zM1194.3,538.1h8v7.2h-8zM1231.0,538.1h8v7.2h-8zM1273.0,538.1h8v7.2h-8zM1113.0,547.2h8v7.2h-8zM1231.0,547.2h8v7.2h-8zM1113.0,556.4h8v7.2h-8zM1113.0,565.3h8v7.2h-8zM1231.0,565.3h8v7.2h-8zM1113.0,574.4h8v7.2h-8zM1113.0,583.6h8v7.2h-8zM1231.0,583.6h8v7.2h-8zM1113.0,592.5h8v7.2h-8zM1231.0,592.5h8v7.2h-8zM1113.0,601.9h8v7.2h-8zM1113.0,610.6h8v7.2h-8zM1113.0,619.9h8v7.2h-8zM1113.0,629.0h8v7.2h-8zM1166.7,629.0h8v7.2h-8zM1219.7,629.0h8v7.2h-8zM1273.0,629.0h8v7.2h-8zM1113.0,654.4h8v7.2h-8zM1219.7,654.4h8v7.2h-8zM1246.2,654.4h8v7.2h-8zM1113.0,663.3h8v7.2h-8zM1219.7,663.3h8v7.2h-8zM1273.0,660.4h8v7.2h-8zM1113.0,672.4h8v7.2h-8zM1166.7,672.4h8v7.2h-8zM1203.7,672.4h8v7.2h-8zM1219.7,672.4h8v7.2h-8zM1273.0,672.4h8v7.2h-8zM1113.0,681.3h8v7.2h-8zM1166.7,681.3h8v7.2h-8zM1219.7,681.3h8v7.2h-8zM1113.0,690.5h8v7.2h-8zM1166.7,690.5h8v7.2h-8zM1219.7,690.5h8v7.2h-8zM1246.2,690.5h8v7.2h-8zM1311.0,690.5h8v7.2h-8zM1329.7,690.5h8v7.2h-8zM1349.7,690.5h8v7.2h-8zM1166.7,699.6h8v7.2h-8zM1288.8,699.6h8v7.2h-8zM1166.7,708.5h8v7.2h-8zM1219.7,708.5h8v7.2h-8zM1288.8,708.5h8v7.2h-8zM1166.7,717.7h8v7.2h-8zM1219.7,717.7h8v7.2h-8zM1254.4,717.7h8v7.2h-8zM1288.8,717.7h8v7.2h-8zM1166.7,727.0h8v7.2h-8zM1219.7,727.0h8v7.2h-8zM1254.4,727.0h8v7.2h-8zM1288.8,727.0h8v7.2h-8zM1178.0,736.2h8v7.2h-8zM1288.8,736.2h8v7.2h-8zM1166.7,745.4h8v7.2h-8zM1219.7,745.4h8v7.2h-8z" fill="none" stroke="#0a870a" stroke-width="1.1"/>
<path d="M1157.8,102.7L1162.6,107.6M1162.6,102.7L1157.8,107.6M1211.6,102.7L1216.4,107.6M1216.4,102.7L1211.6,107.6M1265.0,102.7L1269.8,107.6M1269.8,102.7L1265.0,107.6M1104.9,129.3L1109.7,134.2M1109.7,129.3L1104.9,134.2M1157.8,129.3L1162.6,134.2M1162.6,129.3L1157.8,134.2M1265.0,145.0L1269.8,149.9M1269.8,145.0L1265.0,149.9M1212.1,153.5L1216.9,158.4M1216.9,153.5L1212.1,158.4M1114.3,352.0L1119.1,356.9M1119.1,352.0L1114.3,356.9M1221.2,360.5L1226.0,365.4M1226.0,360.5L1221.2,365.4M1114.3,369.7L1119.1,374.6M1119.1,369.7L1114.3,374.6M1114.3,378.9L1119.1,383.8M1119.1,378.9L1114.3,383.8M1195.9,395.6L1200.7,400.5M1200.7,395.6L1195.9,400.5M1274.6,432.4L1279.4,437.3M1279.4,432.4L1274.6,437.3M1114.3,447.8L1119.1,452.7M1119.1,447.8L1114.3,452.7M1114.3,457.0L1119.1,461.9M1119.1,457.0L1114.3,461.9M1274.6,457.0L1279.4,461.9M1279.4,457.0L1274.6,461.9M1195.9,466.2L1200.7,471.1M1200.7,466.2L1195.9,471.1M1114.3,475.4L1119.1,480.3M1119.1,475.4L1114.3,480.3M1195.9,475.4L1200.7,480.3M1200.7,475.4L1195.9,480.3M1114.3,493.2L1119.1,498.1M1119.1,493.2L1114.3,498.1M1232.6,502.5L1237.4,507.4M1237.4,502.5L1232.6,507.4M1274.6,502.5L1279.4,507.4M1279.4,502.5L1274.6,507.4M1114.3,511.7L1119.1,516.6M1119.1,511.7L1114.3,516.6M1114.3,520.9L1119.1,525.8M1119.1,520.9L1114.3,525.8M1152.6,530.1L1157.4,535.0M1157.4,530.1L1152.6,535.0M1114.3,539.3L1119.1,544.2M1119.1,539.3L1114.3,544.2M1114.6,548.4L1119.4,553.3M1119.4,548.4L1114.6,553.3M1114.6,603.1L1119.4,608.0M1119.4,603.1L1114.6,608.0M1114.6,655.6L1119.4,660.5M1119.4,655.6L1114.6,660.5M1247.8,655.6L1252.6,660.5M1252.6,655.6L1247.8,660.5M1114.6,664.5L1119.4,669.4M1119.4,664.5L1114.6,669.4M1290.4,700.8L1295.2,705.7M1295.2,700.8L1290.4,705.7M1221.3,709.7L1226.1,714.6M1226.1,709.7L1221.3,714.6M1256.0,718.9L1260.8,723.8M1260.8,718.9L1256.0,723.8M1179.6,737.4L1184.4,742.3M1184.4,737.4L1179.6,742.3M1168.3,746.6L1173.1,751.5M1173.1,746.6L1168.3,751.5" fill="none" stroke="#0a870a" stroke-width="0.9"/>
<path d="M1300.0,108.8H1362.0M1156.2,117.2H1256.5M1156.0,126.0H1206.0M1294.0,134.9H1362.7M1294.0,143.9H1362.7M1149.0,150.6H1256.0M1275.0,159.6H1320.0M1209.0,375.3H1262.6M1316.8,375.3H1363.3M1209.0,384.5H1262.6M1141.5,429.0H1315.0M1188.6,438.0H1268.0M1313.0,438.0H1363.0M1302.0,471.8H1363.0M1300.0,517.3H1363.0M1330.0,535.7H1363.0M1300.0,544.9H1363.0M1170.8,563.2H1202.0M1234.6,563.2H1285.0M1258.7,572.1H1363.4M1258.7,590.4H1363.4M1258.7,599.3H1363.4M1209.3,617.4H1315.3M1303.0,679.2H1363.0M1318.0,706.4H1363.0M1334.0,724.5H1363.0M1317.0,733.8H1363.0" fill="none" stroke="#0a870a" stroke-width="1"/></svg>
<div id="hud">
<div class="ht" style="left:5px;top:8px">x:127.500</div>
<div class="ht" style="left:90px;top:8px">dx:227.500 mm</div>
<div class="ht" style="left:5px;top:27px">y: 31.400</div>
<div class="ht" style="left:90px;top:27px">dy:195.600 mm</div>
<div class="hm" style="left:6px;top:45px">Multi-Layer</div>
<div class="hs" style="left:5px;top:65px">Snap: 0.1mm Hotspot Snap: 0.075mm</div>
</div>
<svg id="tbsvg" width="460" height="32" viewBox="575 10 460 32" style="position:absolute;left:575px;top:10px">
<rect x="575.5" y="10" width="458.5" height="31.7" rx="4" fill="#404040"/>
<path d="M676.8,36 L676.8,40.8 L672,40.8 Z" fill="#fff"/>
<path d="M708.8,36 L708.8,40.8 L704,40.8 Z" fill="#fff"/>
<path d="M740.8,36 L740.8,40.8 L736,40.8 Z" fill="#fff"/>
<path d="M772.8,36 L772.8,40.8 L768,40.8 Z" fill="#fff"/>
<path d="M805.8,36 L805.8,40.8 L801,40.8 Z" fill="#fff"/>
<path d="M838.3,36 L838.3,40.8 L833.5,40.8 Z" fill="#fff"/>
<path d="M870.8,36 L870.8,40.8 L866,40.8 Z" fill="#fff"/>
<path d="M902.3,36 L902.3,40.8 L897.5,40.8 Z" fill="#fff"/>
<path d="M934.4,36 L934.4,40.8 L929.6,40.8 Z" fill="#fff"/>
<path d="M966.5,36 L966.5,40.8 L961.7,40.8 Z" fill="#fff"/>
<path d="M998.4,36 L998.4,40.8 L993.6,40.8 Z" fill="#fff"/>
<path d="M1030.2,36 L1030.2,40.8 L1025.4,40.8 Z" fill="#fff"/>
<path d="M589.3,20.2 H602 L598.3,24.5 V30.8 H593.4 V24.5 Z" fill="#86cbe6"/><path d="M589.5,21 H601.8" stroke="#c8ecf7" stroke-width="1"/><path d="M595,24.8 V30.5" stroke="#d5f1fa" stroke-width="1.2"/>
<path d="M624,20.5 H630 A4.6,4.6 0 0 1 630,29.7 H624" fill="none" stroke="#7aa7ee" stroke-width="2.4"/><path d="M624,27.6 H630 A4.6 4.6 0 0 0 634.2,25.1" fill="none" stroke="#ee8c9a" stroke-width="2.4"/><circle cx="621" cy="21" r="1" fill="#a6cfe0"/><circle cx="621" cy="25.5" r="1" fill="#a6cfe0"/><circle cx="621" cy="29.8" r="1" fill="#a6cfe0"/>
<path d="M659.5,19 V32 M653,25.5 H666" stroke="#6a9be8" stroke-width="1.3"/><path d="M659.5,18.6 l-1.5,2 h3z M659.5,32.4 l-1.5,-2 h3z M652.6,25.5 l2,-1.5 v3z M666.4,25.5 l-2,-1.5 v3z" fill="#6a9be8"/>
<rect x="685.5" y="19.5" width="13" height="12.8" fill="none" stroke="#6a9be8" stroke-width="1.2" stroke-dasharray="2.2,1.6"/>
<rect x="718" y="23.4" width="3.3" height="5.4" fill="#ef8f9c"/><rect x="721.9" y="20.2" width="4.1" height="8.6" fill="#8fd0e8"/><rect x="726.6" y="23.4" width="3.2" height="5.4" fill="#ef8f9c"/><rect x="717.7" y="30" width="12.4" height="1.5" fill="#6aa5e8"/>
<line x1="740.2" y1="18" x2="740.2" y2="33.5" stroke="#1e1e1e" stroke-width="1"/>
<rect x="751" y="19.8" width="11.5" height="11.5" fill="#d2d2d2" stroke="#a9d4de" stroke-width="0.8"/><path d="M752.5,18V19.5M755,18V19.5M757.5,18V19.5M760,18V19.5M752.5,31.6V33M755,31.6V33M757.5,31.6V33M760,31.6V33M749.2,21.5H750.7M749.2,24H750.7M749.2,26.5H750.7M749.2,29H750.7M762.8,21.5H764.3M762.8,24H764.3M762.8,26.5H764.3M762.8,29H764.3" stroke="#a9d4de" stroke-width="0.9"/>
<path d="M782.5,27 V21 H788" stroke="#f0a92a" stroke-width="1.2" fill="none"/><path d="M787.5,19.2 l2.2,1.8 l-2.2,1.8z" fill="#f0a92a"/><line x1="783.5" y1="31" x2="792.5" y2="22" stroke="#6a9be8" stroke-width="1.3"/><circle cx="783.5" cy="31.5" r="1.8" fill="none" stroke="#f0a92a" stroke-width="1.1"/><circle cx="793.5" cy="21.5" r="1.8" fill="none" stroke="#f0a92a" stroke-width="1.1"/>
<path d="M815.5,28 V24 A2.1,2.1 0 0 1 819.7,24 V26 A2,2 0 0 0 823.7,26 V24 A2.1,2.1 0 0 1 827.9,24 V28" fill="none" stroke="#6a9be8" stroke-width="1.1"/><circle cx="815.3" cy="29.3" r="1.4" fill="none" stroke="#f0a92a" stroke-width="1"/><circle cx="827.8" cy="29.3" r="1.4" fill="none" stroke="#f0a92a" stroke-width="1"/>
<rect x="849.8" y="27.5" width="2.6" height="5.4" fill="#f0a92a"/><circle cx="851" cy="24.2" r="4.6" fill="#f7bf2f" stroke="#e39a1a" stroke-width="0.6"/><circle cx="851" cy="24.2" r="1.2" fill="#333"/><rect x="855.4" y="22.8" width="5" height="2.8" fill="#3cb53a"/>
<path d="M877.8,31.6 V24.6 H884 V20.4 H892.8 V31.6 Z" fill="#c8edf1" stroke="#4f88d8" stroke-width="1.1"/>
<rect x="909.5" y="18.3" width="15.5" height="15.5" fill="none" stroke="#777" stroke-width="0.9"/><path d="M913.8,29.6 L920.6,22.8" stroke="#888" stroke-width="1"/><circle cx="913.8" cy="29.6" r="1.3" fill="none" stroke="#888" stroke-width="0.8"/><circle cx="920.6" cy="22.8" r="1.3" fill="none" stroke="#888" stroke-width="0.8"/>
<path d="M942.6,20.5 V31.8 H955 V20.5" fill="none" stroke="#7cb4d8" stroke-width="1"/><text x="944.5" y="30" style="font:9px Liberation Sans;fill:#ddd">10</text><circle cx="943.2" cy="19.8" r="1.4" fill="none" stroke="#f0a92a" stroke-width="0.9"/><circle cx="955.3" cy="19.8" r="1.4" fill="none" stroke="#f0a92a" stroke-width="0.9"/>
<text x="974.5" y="33" style="font:bold 17px Liberation Serif;fill:#6ea6ea">A</text>
<line x1="1006.8" y1="32.2" x2="1019.8" y2="19.3" stroke="#5f95e6" stroke-width="1.6"/>
</svg>
<div id="bottom">
<div style="position:absolute;left:2px;top:4px;width:56px;height:17px;background:#4a4a4a;border:1px solid #222;border-radius:0 3px 3px 0"></div>
<div style="position:absolute;left:3px;top:5px;width:30px;height:15px;background:#c4c4c4"></div>
<div class="bt" style="left:38.5px;top:6px;font-size:13px">LS</div>
<div style="position:absolute;left:64px;top:2px;width:50px;height:24px;background:#4f4f4f;border:1px solid #2e2e2e;border-radius:3px"></div>
<div style="position:absolute;left:89.5px;top:3px;width:1px;height:22px;background:#222"></div>
<svg width="120" height="31" style="position:absolute;left:0;top:0"><path d="M72,13.6 L77,9 V18.2 Z" fill="#fff"/><path d="M104.2,13.6 L99.2,9 V18.2 Z" fill="#8a8a8a"/></svg>
<div style="position:absolute;left:118.3px;top:0;width:1.2px;height:26px;background:#252525"></div>
<div style="position:absolute;left:127.0px;top:7px;width:13px;height:13px;background:#008000;border:1px solid #b4b4b4"></div>
<div class="bt" style="left:149.2px;top:6.3px">Mechanical 15</div>
<div style="position:absolute;left:244.9px;top:0;width:1.2px;height:26px;background:#252525"></div>
<div style="position:absolute;left:254.0px;top:7px;width:13px;height:13px;background:#000000;border:1px solid #b4b4b4"></div>
<div class="bt" style="left:276.0px;top:6.3px">Sheet Detail</div>
<div style="position:absolute;left:355.8px;top:0;width:1.2px;height:26px;background:#252525"></div>
<div style="position:absolute;left:366.0px;top:7px;width:13px;height:13px;background:#ffff00;border:1px solid #b4b4b4"></div>
<div class="bt" style="left:389.0px;top:6.3px">Top Overlay</div>
<div style="position:absolute;left:468.5px;top:0;width:1.2px;height:26px;background:#252525"></div>
<div style="position:absolute;left:479.3px;top:7px;width:13px;height:13px;background:#808000;border:1px solid #b4b4b4"></div>
<div class="bt" style="left:501.0px;top:6.3px">Bottom Overlay</div>
<div style="position:absolute;left:605.9px;top:0;width:1.2px;height:26px;background:#252525"></div>
<div style="position:absolute;left:615.0px;top:7px;width:13px;height:13px;background:#808080;border:1px solid #b4b4b4"></div>
<div class="bt" style="left:638.6px;top:6.3px">Top Paste</div>
<div style="position:absolute;left:705.5px;top:0;width:1.2px;height:26px;background:#252525"></div>
<div style="position:absolute;left:714.0px;top:7px;width:13px;height:13px;background:#800000;border:1px solid #b4b4b4"></div>
<div class="bt" style="left:736.4px;top:6.3px">Bottom Paste</div>
<div style="position:absolute;left:827.0px;top:0;width:1.2px;height:26px;background:#252525"></div>
<div style="position:absolute;left:836.0px;top:7px;width:13px;height:13px;background:#800080;border:1px solid #b4b4b4"></div>
<div class="bt" style="left:859.0px;top:6.3px">Top Solder</div>
<div style="position:absolute;left:930.8px;top:0;width:1.2px;height:26px;background:#252525"></div>
<div style="position:absolute;left:940.0px;top:7px;width:13px;height:13px;background:#ff00ff;border:1px solid #b4b4b4"></div>
<div class="bt" style="left:962.4px;top:6.3px">Bottom Solder</div>
<div style="position:absolute;left:1058.3px;top:0;width:1.2px;height:26px;background:#252525"></div>
<div style="position:absolute;left:1067.5px;top:7px;width:13px;height:13px;background:#800000;border:1px solid #b4b4b4"></div>
<div class="bt" style="left:1089.5px;top:6.3px">Drill Guide</div>
<div style="position:absolute;left:1160.1px;top:0;width:1.2px;height:26px;background:#252525"></div>
<div style="position:absolute;left:1170.0px;top:7px;width:13px;height:13px;background:#ff00ff;border:1px solid #b4b4b4"></div>
<div class="bt" style="left:1192.0px;top:6.3px">Keep-Out Layer</div>
<div style="position:absolute;left:1296.5px;top:0;width:1.2px;height:26px;background:#252525"></div>
<div style="position:absolute;left:1306.0px;top:7px;width:13px;height:13px;background:#ff0a2f;border:1px solid #b4b4b4"></div>
<div class="bt" style="left:1328.3px;top:6.3px">Drill Drawing</div>
<div style="position:absolute;left:1416px;top:0;width:115px;height:26px;background:#4a4a4a;border-radius:0 0 3px 3px;border-bottom:1px solid #2a2a2a"></div>
<div style="position:absolute;left:1424px;top:7px;width:13px;height:13px;background:#c8c8c8"></div>
<div class="bt" style="left:1446px;top:6px;font-weight:bold;font-size:14.4px">Multi-Layer</div>
<div style="position:absolute;left:0;top:25.6px;width:1603px;height:1px;background:#2b2b2b"></div>
</div>
<div id="wm" style="position:absolute;left:1368px;top:846px;width:230px;height:50px;pointer-events:none">
<svg width="230" height="50" style="position:absolute;left:0;top:0"><rect x="6" y="6" width="38" height="37" rx="9" fill="none" stroke="rgba(230,60,60,0.28)" stroke-width="6"/><path d="M17,15 V36 M29,15 V36 M17,25 H29" stroke="rgba(230,60,60,0.28)" stroke-width="5" fill="none"/></svg>
<div style="position:absolute;left:52px;top:0px;font:bold 42px 'Liberation Sans',sans-serif;letter-spacing:-1px;color:rgba(0,0,0,0.17);line-height:48px">Next<span style="color:rgba(220,40,40,0.28)">PCB</span></div>
</div>
</body></html>
